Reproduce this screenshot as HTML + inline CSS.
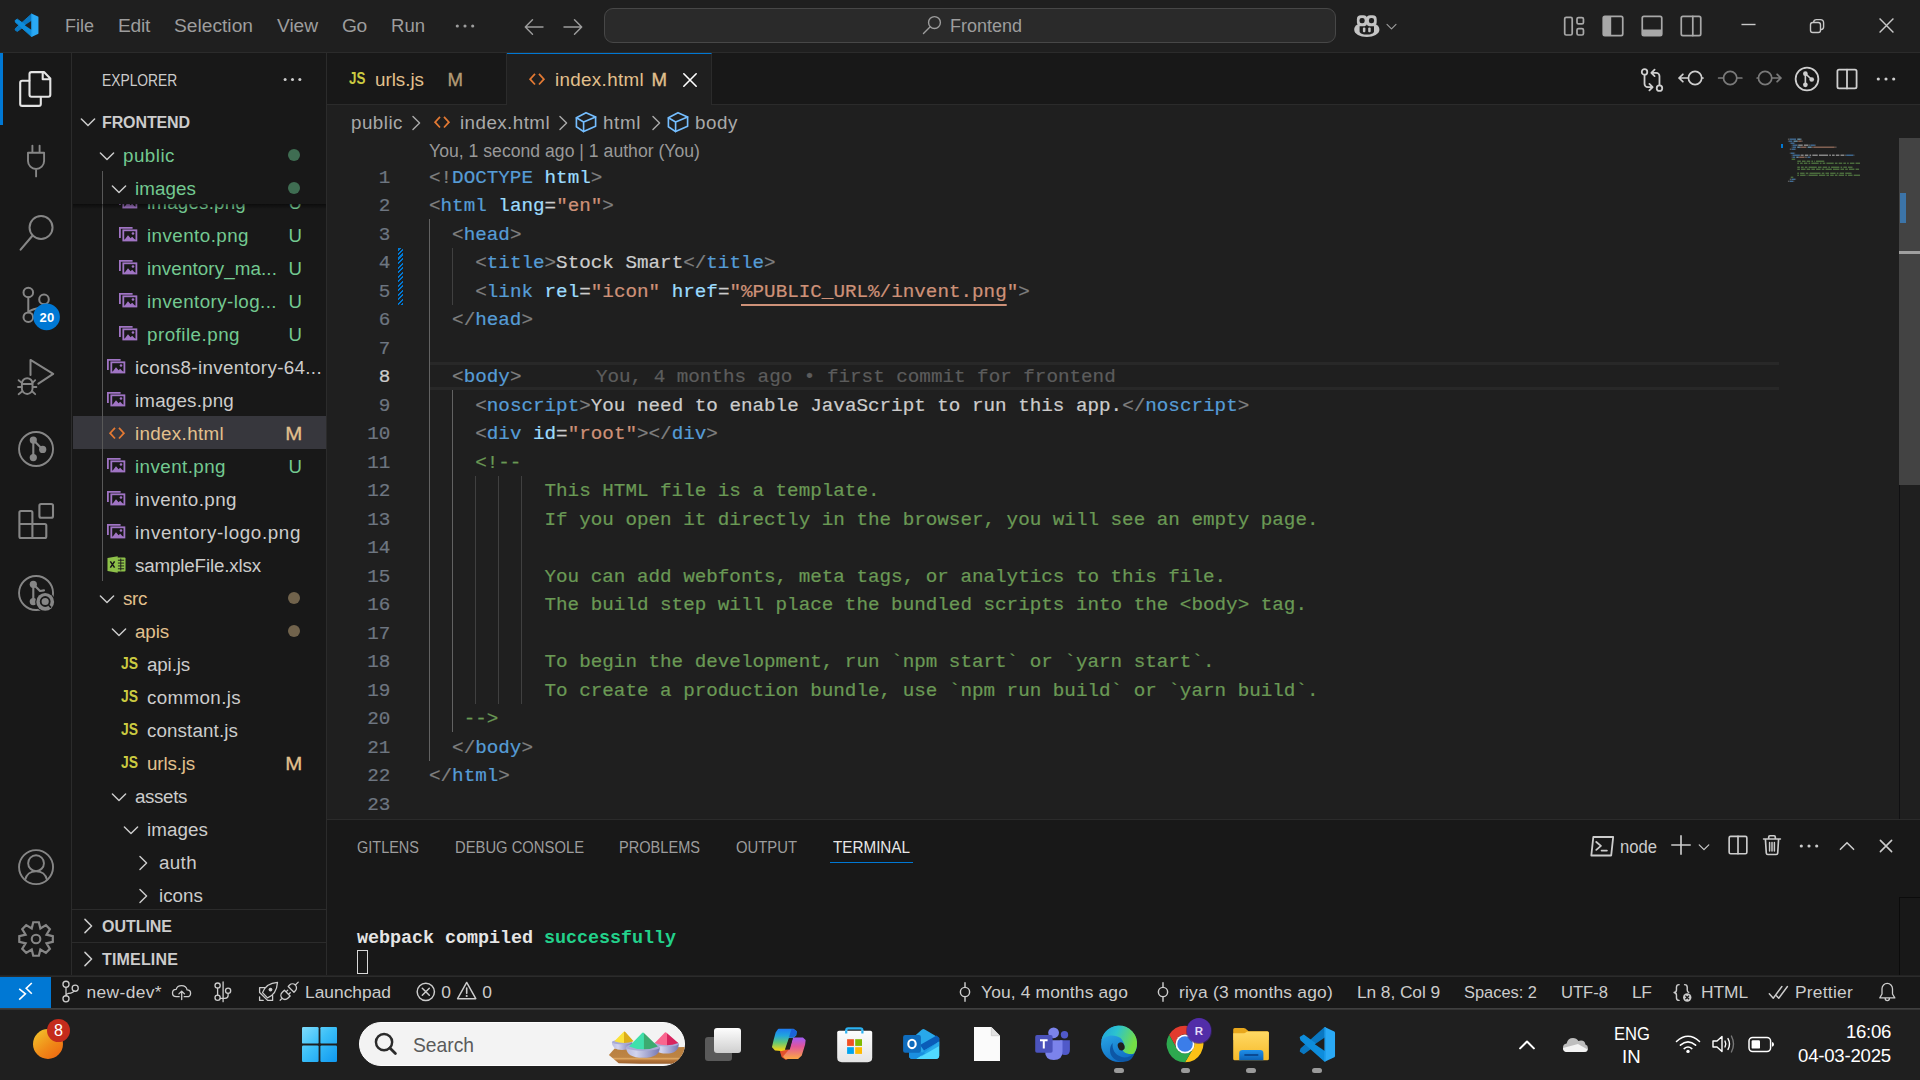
<!DOCTYPE html><html lang="en"><head><meta charset="utf-8"><title>index.html - Frontend - Visual Studio Code</title><style>

*{box-sizing:border-box;margin:0;padding:0}
html,body{width:1920px;height:1080px;overflow:hidden;background:#1f1f1f;font-family:"Liberation Sans",sans-serif;}
body{position:relative}
div,svg,span.t{position:absolute}
span.t{white-space:pre;display:block}
svg{overflow:visible}
.m{font-family:"Liberation Mono",monospace;-webkit-text-stroke-width:.22px}
.u{text-decoration:underline;text-underline-offset:7.4px;text-decoration-thickness:1.6px}
.g{color:#808080}.b{color:#569cd6}.a{color:#9cdcfe}.s{color:#ce9178}.c{color:#6a9955}.w{color:#cccccc}

</style></head><body>
<div style="left:0px;top:0px;width:1920px;height:53px;background:#1f1f1f;border-bottom:1px solid #2b2b2b;"></div>
<div style="left:0px;top:53px;width:72px;height:923px;background:#181818;border-right:1px solid #2b2b2b;"></div>
<div style="left:72px;top:53px;width:255px;height:923px;background:#181818;border-right:1px solid #2b2b2b;"></div>
<div style="left:327px;top:53px;width:1593px;height:52px;background:#181818;border-bottom:1px solid #2b2b2b;"></div>
<div style="left:327px;top:105px;width:1593px;height:714px;background:#1f1f1f;"></div>
<div style="left:327px;top:819px;width:1593px;height:157px;background:#181818;border-top:1px solid #2b2b2b;"></div>
<div style="left:0px;top:975px;width:1920px;height:33px;background:#181818;"></div>
<div style="left:0px;top:975px;width:1920px;height:1px;background:#232323;"></div>
<div style="left:0px;top:976px;width:1920px;height:1px;background:#2b2b2b;"></div>
<div style="left:0px;top:1008px;width:1920px;height:72px;background:#1f1f1f;"></div>
<div style="left:0px;top:1008px;width:1920px;height:2px;background:linear-gradient(#444,#303030);"></div>
<svg style="left:14px;top:13.4px;" width="24.8" height="24.6" viewBox="0 0 100 100"><path d="M70 5 L73 31 L13 75 L4 69 L6 62 Z" fill="#0a78c2" stroke="#0a78c2" stroke-width="4" stroke-linejoin="round"/><path d="M4 31 L13 25 L73 69 L70 95 L6 38 Z" fill="#0e8ddc" stroke="#0e8ddc" stroke-width="4" stroke-linejoin="round"/><path d="M73 30 L43.5 50 L73 70 Z" fill="#1f1f1f"/><path d="M70.5 2.5 L97 14.5 Q99 15.5 99 18 V82 Q99 84.5 97 85.5 L70.5 97.5 Z" fill="#2aa9f5"/><path d="M70.5 2.5 L74 4 V96 L70.5 97.5 Z" fill="#1e9cec"/></svg>
<span class="t" style="top:11.8px;height:27px;line-height:27px;font-size:19.2px;color:#9d9d9d;left:65px;transform:scaleX(0.9378);transform-origin:0 50%;">File</span>
<span class="t" style="top:11.8px;height:27px;line-height:27px;font-size:19.2px;color:#9d9d9d;left:118px;letter-spacing:-0.270px;">Edit</span>
<span class="t" style="top:11.8px;height:27px;line-height:27px;font-size:19.2px;color:#9d9d9d;left:174px;letter-spacing:0.007px;">Selection</span>
<span class="t" style="top:11.8px;height:27px;line-height:27px;font-size:19.2px;color:#9d9d9d;left:277px;letter-spacing:-0.062px;">View</span>
<span class="t" style="top:11.8px;height:27px;line-height:27px;font-size:19.2px;color:#9d9d9d;left:342px;letter-spacing:-0.305px;">Go</span>
<span class="t" style="top:11.8px;height:27px;line-height:27px;font-size:19.2px;color:#9d9d9d;left:391px;transform:scaleX(0.9658);transform-origin:0 50%;">Run</span>
<svg style="left:454px;top:15px;" width="22" height="22" viewBox="0 0 16 16"><circle cx="2.4" cy="8" r="1.15" fill="#9d9d9d"/><circle cx="8" cy="8" r="1.15" fill="#9d9d9d"/><circle cx="13.6" cy="8" r="1.15" fill="#9d9d9d"/></svg>
<svg style="left:522px;top:15px;" width="24" height="24" viewBox="0 0 16 16"><path d="M14 8 H2.5 M7 3.2 L2.2 8 L7 12.8" fill="none" stroke="#9d9d9d" stroke-width="0.95" stroke-linecap="round" stroke-linejoin="round"  stroke-linecap="butt" stroke-linejoin="miter"/></svg>
<svg style="left:561px;top:15px;" width="24" height="24" viewBox="0 0 16 16"><path d="M2 8 H13.5 M9 3.2 L13.8 8 L9 12.8" fill="none" stroke="#9d9d9d" stroke-width="0.95" stroke-linecap="round" stroke-linejoin="round"  stroke-linecap="butt" stroke-linejoin="miter"/></svg>
<div style="left:604px;top:8px;width:732px;height:35px;background:#2a2a2a;border:1px solid #474747;border-radius:9px;"></div>
<svg style="left:921px;top:14px;" width="22" height="22" viewBox="0 0 16 16"><circle cx="9.8" cy="6.2" r="4.3" fill="none" stroke="#9d9d9d" stroke-width="1.0" stroke-linecap="round" stroke-linejoin="round" /><path d="M6.7 9.3 L1.8 14.2" fill="none" stroke="#9d9d9d" stroke-width="1.0" stroke-linecap="round" stroke-linejoin="round" /></svg>
<span class="t" style="top:13.7px;height:25px;line-height:25px;font-size:18px;color:#9d9d9d;left:950px;letter-spacing:-0.006px;">Frontend</span>
<svg style="left:1354.4px;top:15px;" width="25.6" height="22" viewBox="0 0 25.6 22"><path d="M3.4 9.6 C1.2 10.6 .2 12.6 .2 14.8 C.2 19 6 22 12.8 22 S25.4 19 25.4 14.8 C25.4 12.6 24.4 10.6 22.2 9.6 Z" fill="#c4c4c4"/><rect x="2.9" y=".3" width="10.4" height="10.6" rx="4" fill="#c4c4c4"/><rect x="12.3" y=".3" width="10.4" height="10.6" rx="4" fill="#c4c4c4"/><rect x="5.5" y="2.9" width="5.2" height="5.4" rx="2.3" fill="#1f1f1f"/><rect x="14.9" y="2.9" width="5.2" height="5.4" rx="2.3" fill="#1f1f1f"/><path d="M5.6 11.3 L10.6 11.3 L12.8 9.9 L15 11.3 L20 11.3 V16.4 C20 18.4 16 19.6 12.8 19.6 S5.6 18.4 5.6 16.4 Z" fill="#1f1f1f"/><rect x="8.9" y="12.6" width="2.5" height="4.6" rx="1" fill="#c4c4c4"/><rect x="14.2" y="12.6" width="2.5" height="4.6" rx="1" fill="#c4c4c4"/></svg>
<svg style="left:1384px;top:19px;" width="15" height="15" viewBox="0 0 16 16"><path d="M3.2 5.8 L8 10.6 L12.8 5.8" fill="none" stroke="#9d9d9d" stroke-width="1.2" stroke-linecap="round" stroke-linejoin="round"  stroke-linecap="butt" stroke-linejoin="miter"/></svg>
<svg style="left:1562px;top:14px;" width="24" height="24" viewBox="0 0 16 16"><rect x="1.8" y="2.2" width="5" height="11.8" rx="1" fill="none" stroke="#a8a8a8" stroke-width="1.15" stroke-linecap="round" stroke-linejoin="round" /><rect x="10" y="2.4" width="4.3" height="4.2" rx="1" fill="none" stroke="#a8a8a8" stroke-width="1.15" stroke-linecap="round" stroke-linejoin="round" /><rect x="10" y="9.7" width="4.3" height="4.3" rx="1" fill="none" stroke="#a8a8a8" stroke-width="1.15" stroke-linecap="round" stroke-linejoin="round" /></svg>
<svg style="left:1601px;top:14px;" width="24" height="24" viewBox="0 0 16 16"><rect x="1.5" y="1.6" width="13" height="12.8" rx="1.1" fill="none" stroke="#a8a8a8" stroke-width="1.15" stroke-linecap="round" stroke-linejoin="round" /><path d="M1.6 2.6 a1 1 0 0 1 1-1 H6.8 V14.4 H2.6 a1 1 0 0 1-1-1 Z" fill="#a8a8a8"/></svg>
<svg style="left:1640px;top:14px;" width="24" height="24" viewBox="0 0 16 16"><rect x="1.5" y="1.6" width="13" height="12.8" rx="1.1" fill="none" stroke="#a8a8a8" stroke-width="1.15" stroke-linecap="round" stroke-linejoin="round" /><path d="M1.6 10.4 H14.4 V13.4 a1 1 0 0 1-1 1 H2.6 a1 1 0 0 1-1-1 Z" fill="#a8a8a8"/></svg>
<svg style="left:1679px;top:14px;" width="24" height="24" viewBox="0 0 16 16"><rect x="1.5" y="1.6" width="13" height="12.8" rx="1.1" fill="none" stroke="#a8a8a8" stroke-width="1.15" stroke-linecap="round" stroke-linejoin="round" /><path d="M9.2 1.6 V14.4" fill="none" stroke="#a8a8a8" stroke-width="1.15" stroke-linecap="round" stroke-linejoin="round" /></svg>
<svg style="left:1741px;top:17.2px;" width="15" height="15" viewBox="0 0 16 16"><path d="M.5 8 H15.5" stroke="#c8c8c8" stroke-width="1.5"/></svg>
<svg style="left:1809px;top:18px;" width="16" height="16" viewBox="0 0 16 16"><rect x="1.5" y="4.5" width="10" height="10" rx="2.2" fill="none" stroke="#c8c8c8" stroke-width="1.4" stroke-linecap="round" stroke-linejoin="round" /><path d="M4.6 4.2 C4.8 2.6 5.8 1.6 7.4 1.6 H11.4 A3.2 3.2 0 0 1 14.6 4.8 V9 C14.6 10.4 13.6 11.4 12 11.6" fill="none" stroke="#c8c8c8" stroke-width="1.4" stroke-linecap="round" stroke-linejoin="round" /></svg>
<svg style="left:1879px;top:18px;" width="15" height="15" viewBox="0 0 16 16"><path d="M.6 .6 L15.4 15.4 M15.4 .6 L.6 15.4" stroke="#c8c8c8" stroke-width="1.5"/></svg>
<div style="left:0px;top:53px;width:3px;height:72px;background:#0078d4;"></div>
<svg style="left:0px;top:0px;" width="72" height="976" viewBox="0 0 72 976"><path d="M31.5 72.1 H44 L50.3 78.4 V94.8 a2 2 0 0 1-2 2 H31.5 a2 2 0 0 1-2-2 V74.1 a2 2 0 0 1 2-2 Z M42.7 72.4 V79.2 H50" fill="none" stroke="#e4e4e4" stroke-width="2.1" stroke-linecap="round" stroke-linejoin="round"/><path d="M29.3 80.8 H22.2 a2 2 0 0 0-2 2 V103.9 a2 2 0 0 0 2 2 H38.8 a2 2 0 0 0 2-2 V97" fill="none" stroke="#e4e4e4" stroke-width="2.1" stroke-linecap="round" stroke-linejoin="round"/><path d="M32.4 145.6 V152.6 M39.6 145.6 V152.6 M28 152.8 H44.1 V160.9 a8.05 8.05 0 0 1-16.1 0 Z M36.1 169 V176.4" fill="none" stroke="#868686" stroke-width="1.9" stroke-linecap="round" stroke-linejoin="round" stroke-linecap="butt"/><circle cx="41.05" cy="227.5" r="11.5" fill="none" stroke="#868686" stroke-width="2" stroke-linecap="round" stroke-linejoin="round"/><path d="M32.6 235.5 L20.6 249.6" fill="none" stroke="#868686" stroke-width="2.1" stroke-linecap="round" stroke-linejoin="round" stroke-linecap="butt"/><circle cx="28.3" cy="292.5" r="4.8" fill="none" stroke="#868686" stroke-width="2" stroke-linecap="round" stroke-linejoin="round"/><circle cx="44" cy="299.4" r="4.8" fill="none" stroke="#868686" stroke-width="2" stroke-linecap="round" stroke-linejoin="round"/><circle cx="28.3" cy="317.2" r="4.8" fill="none" stroke="#868686" stroke-width="2" stroke-linecap="round" stroke-linejoin="round"/><path d="M28.3 297.4 V312.3 M44 304.3 C44 309.5 32 307.5 28.8 312" fill="none" stroke="#868686" stroke-width="2" stroke-linecap="round" stroke-linejoin="round"/><circle cx="46.6" cy="316.9" r="13.3" fill="#0078d4"/><path d="M30.5 375 V359.9 L53.2 373.9 L38.4 383.7" fill="none" stroke="#868686" stroke-width="2" stroke-linecap="round" stroke-linejoin="round" stroke-linecap="butt" stroke-linejoin="miter"/><rect x="21.9" y="378.2" width="10.6" height="15.8" rx="5.3" fill="none" stroke="#868686" stroke-width="1.9" stroke-linecap="round" stroke-linejoin="round"/><path d="M22 384 H32.4 M18 387 H21.6 M32.8 387 H36.4 M18.6 380.2 L22.4 383.4 M35.2 380.2 L32 383.4 M18.6 394.2 L22.6 391 M35.2 394.2 L31.8 391" fill="none" stroke="#868686" stroke-width="1.8" stroke-linecap="round" stroke-linejoin="round" stroke-linecap="butt"/><circle cx="36.05" cy="449" r="17" fill="none" stroke="#868686" stroke-width="1.9" stroke-linecap="round" stroke-linejoin="round"/><circle cx="33.3" cy="440.1" r="3.6" fill="#868686"/><circle cx="33.3" cy="457.6" r="3.6" fill="#868686"/><circle cx="42.7" cy="449.4" r="3.6" fill="#868686"/><path d="M33.3 440.1 V457.6 M33.3 440.1 L42.7 449.4" fill="none" stroke="#868686" stroke-width="2.1" stroke-linecap="round" stroke-linejoin="round"/><path d="M19.4 512.5 a1.5 1.5 0 0 1 1.5-1.5 H30.9 a1.5 1.5 0 0 1 1.5 1.5 V524 H44.8 a1.5 1.5 0 0 1 1.5 1.5 V536.5 a1.5 1.5 0 0 1-1.5 1.5 H20.9 a1.5 1.5 0 0 1-1.5-1.5 Z M19.4 524 H32.4 V538" fill="none" stroke="#868686" stroke-width="2.1" stroke-linecap="round" stroke-linejoin="round"/><rect x="39.4" y="504" width="13.6" height="13.7" rx="1.8" fill="none" stroke="#868686" stroke-width="2.1" stroke-linecap="round" stroke-linejoin="round"/><circle cx="36.05" cy="593" r="17" fill="none" stroke="#868686" stroke-width="1.9" stroke-linecap="round" stroke-linejoin="round"/><circle cx="33.3" cy="584.3" r="3.6" fill="#868686"/><circle cx="33.3" cy="601.6" r="3.6" fill="#868686"/><path d="M33.3 584.3 V601.6 M33.3 584.3 L40 591 L44 590.4" fill="none" stroke="#868686" stroke-width="2.1" stroke-linecap="round" stroke-linejoin="round"/><circle cx="45.2" cy="601.9" r="10" fill="#181818"/><circle cx="45.2" cy="601.9" r="8.9" fill="#868686"/><circle cx="45.2" cy="601.5" r="4.5" fill="none" stroke="#181818" stroke-width="1.8"/><path d="M48.6 605 L51 607.6" stroke="#181818" stroke-width="1.6"/><circle cx="36.05" cy="867.1" r="17" fill="none" stroke="#868686" stroke-width="1.9" stroke-linecap="round" stroke-linejoin="round"/><circle cx="36.05" cy="863.2" r="7.9" fill="none" stroke="#868686" stroke-width="1.9" stroke-linecap="round" stroke-linejoin="round"/><path d="M25.2 879.6 C26.6 874 30.6 871.4 36.05 871.4 S45.6 874 46.9 879.6" fill="none" stroke="#868686" stroke-width="1.9" stroke-linecap="round" stroke-linejoin="round"/><path d="M33.24 922.23 L38.86 922.23 L40.37 928.56 L45.92 925.16 L49.89 929.13 L46.49 934.68 L52.82 936.19 L52.82 941.81 L46.49 943.32 L49.89 948.87 L45.92 952.84 L40.37 949.44 L38.86 955.77 L33.24 955.77 L31.73 949.44 L26.18 952.84 L22.21 948.87 L25.61 943.32 L19.28 941.81 L19.28 936.19 L25.61 934.68 L22.21 929.13 L26.18 925.16 L31.73 928.56 Z" fill="none" stroke="#868686" stroke-width="2.2" stroke-linejoin="miter"/><circle cx="36.05" cy="939" r="4.3" fill="none" stroke="#868686" stroke-width="2.1" stroke-linecap="round" stroke-linejoin="round"/></svg>
<span class="t" style="top:309.2px;height:18px;line-height:18px;font-size:13px;color:#fff;font-weight:700;left:39.4px;letter-spacing:0.266px;">20</span>
<span class="t" style="top:68.8px;height:23px;line-height:23px;font-size:16.2px;color:#cccccc;left:102px;transform:scaleX(0.8540);transform-origin:0 50%;">EXPLORER</span>
<svg style="left:282px;top:69px;" width="21" height="21" viewBox="0 0 16 16"><circle cx="2.4" cy="8" r="1.15" fill="#cccccc"/><circle cx="8" cy="8" r="1.15" fill="#cccccc"/><circle cx="13.6" cy="8" r="1.15" fill="#cccccc"/></svg>
<svg style="left:76.5px;top:111px;" width="22" height="22" viewBox="0 0 16 16"><path d="M3.2 5.8 L8 10.6 L12.8 5.8" fill="none" stroke="#cccccc" stroke-width="1.1" stroke-linecap="round" stroke-linejoin="round"  stroke-linecap="butt" stroke-linejoin="miter"/></svg>
<span class="t" style="top:112px;height:22px;line-height:22px;font-size:16px;color:#cccccc;font-weight:700;left:102px;letter-spacing:-0.111px;">FRONTEND</span>
<div style="left:0;top:0;width:1920px;height:1080px;clip-path:inset(204px 1594px 170px 73px);">
<div style="left:73px;top:416px;width:253px;height:33px;background:#37373d;"></div>
<div style="left:102px;top:171px;width:1px;height:410px;background:#585858;"></div>
<svg style="left:119.4px;top:193.5px;" width="18.3" height="14.4" viewBox="0 0 18.3 14.4"><path d="M.9 10.9 V.9 H13.6" fill="none" stroke="#a074c4" stroke-width="1.8"/><rect x="4.3" y="3.3" width="13.1" height="10.2" fill="none" stroke="#a074c4" stroke-width="1.8"/><path d="M5 13.6 L9 8.2 L11.6 11.3 L13.2 9.7 L16.7 13.6 Z" fill="#a074c4"/><circle cx="14" cy="6.5" r="1.3" fill="#a074c4"/></svg>
<span class="t" style="top:190px;height:26px;line-height:26px;font-size:18.8px;color:#73c991;left:147px;letter-spacing:0.189px;">images.png</span>
<span class="t" style="top:190px;height:26px;line-height:26px;font-size:18.6px;color:#73c991;left:288.5px;">U</span>
<svg style="left:119.4px;top:226.5px;" width="18.3" height="14.4" viewBox="0 0 18.3 14.4"><path d="M.9 10.9 V.9 H13.6" fill="none" stroke="#a074c4" stroke-width="1.8"/><rect x="4.3" y="3.3" width="13.1" height="10.2" fill="none" stroke="#a074c4" stroke-width="1.8"/><path d="M5 13.6 L9 8.2 L11.6 11.3 L13.2 9.7 L16.7 13.6 Z" fill="#a074c4"/><circle cx="14" cy="6.5" r="1.3" fill="#a074c4"/></svg>
<span class="t" style="top:223px;height:26px;line-height:26px;font-size:18.8px;color:#73c991;left:147px;letter-spacing:0.443px;">invento.png</span>
<span class="t" style="top:223px;height:26px;line-height:26px;font-size:18.6px;color:#73c991;left:288.5px;">U</span>
<svg style="left:119.4px;top:259.5px;" width="18.3" height="14.4" viewBox="0 0 18.3 14.4"><path d="M.9 10.9 V.9 H13.6" fill="none" stroke="#a074c4" stroke-width="1.8"/><rect x="4.3" y="3.3" width="13.1" height="10.2" fill="none" stroke="#a074c4" stroke-width="1.8"/><path d="M5 13.6 L9 8.2 L11.6 11.3 L13.2 9.7 L16.7 13.6 Z" fill="#a074c4"/><circle cx="14" cy="6.5" r="1.3" fill="#a074c4"/></svg>
<span class="t" style="top:256px;height:26px;line-height:26px;font-size:18.8px;color:#73c991;left:147px;letter-spacing:0.106px;">inventory_ma...</span>
<span class="t" style="top:256px;height:26px;line-height:26px;font-size:18.6px;color:#73c991;left:288.5px;">U</span>
<svg style="left:119.4px;top:292.5px;" width="18.3" height="14.4" viewBox="0 0 18.3 14.4"><path d="M.9 10.9 V.9 H13.6" fill="none" stroke="#a074c4" stroke-width="1.8"/><rect x="4.3" y="3.3" width="13.1" height="10.2" fill="none" stroke="#a074c4" stroke-width="1.8"/><path d="M5 13.6 L9 8.2 L11.6 11.3 L13.2 9.7 L16.7 13.6 Z" fill="#a074c4"/><circle cx="14" cy="6.5" r="1.3" fill="#a074c4"/></svg>
<span class="t" style="top:289px;height:26px;line-height:26px;font-size:18.8px;color:#73c991;left:147px;letter-spacing:0.426px;">inventory-log...</span>
<span class="t" style="top:289px;height:26px;line-height:26px;font-size:18.6px;color:#73c991;left:288.5px;">U</span>
<svg style="left:119.4px;top:325.5px;" width="18.3" height="14.4" viewBox="0 0 18.3 14.4"><path d="M.9 10.9 V.9 H13.6" fill="none" stroke="#a074c4" stroke-width="1.8"/><rect x="4.3" y="3.3" width="13.1" height="10.2" fill="none" stroke="#a074c4" stroke-width="1.8"/><path d="M5 13.6 L9 8.2 L11.6 11.3 L13.2 9.7 L16.7 13.6 Z" fill="#a074c4"/><circle cx="14" cy="6.5" r="1.3" fill="#a074c4"/></svg>
<span class="t" style="top:322px;height:26px;line-height:26px;font-size:18.8px;color:#73c991;left:147px;letter-spacing:0.480px;">profile.png</span>
<span class="t" style="top:322px;height:26px;line-height:26px;font-size:18.6px;color:#73c991;left:288.5px;">U</span>
<svg style="left:107.4px;top:358.5px;" width="18.3" height="14.4" viewBox="0 0 18.3 14.4"><path d="M.9 10.9 V.9 H13.6" fill="none" stroke="#a074c4" stroke-width="1.8"/><rect x="4.3" y="3.3" width="13.1" height="10.2" fill="none" stroke="#a074c4" stroke-width="1.8"/><path d="M5 13.6 L9 8.2 L11.6 11.3 L13.2 9.7 L16.7 13.6 Z" fill="#a074c4"/><circle cx="14" cy="6.5" r="1.3" fill="#a074c4"/></svg>
<span class="t" style="top:355px;height:26px;line-height:26px;font-size:18.8px;color:#cccccc;left:135px;letter-spacing:0.338px;">icons8-inventory-64...</span>
<svg style="left:107.4px;top:391.5px;" width="18.3" height="14.4" viewBox="0 0 18.3 14.4"><path d="M.9 10.9 V.9 H13.6" fill="none" stroke="#a074c4" stroke-width="1.8"/><rect x="4.3" y="3.3" width="13.1" height="10.2" fill="none" stroke="#a074c4" stroke-width="1.8"/><path d="M5 13.6 L9 8.2 L11.6 11.3 L13.2 9.7 L16.7 13.6 Z" fill="#a074c4"/><circle cx="14" cy="6.5" r="1.3" fill="#a074c4"/></svg>
<span class="t" style="top:388px;height:26px;line-height:26px;font-size:18.8px;color:#cccccc;left:135px;letter-spacing:0.189px;">images.png</span>
<svg style="left:109px;top:426.8px;" width="16" height="12.4" viewBox="0 0 16 12.4"><path d="M6 .9 L1.1 6.2 L6 11.5 M10 .9 L14.9 6.2 L10 11.5" fill="none" stroke="#e37933" stroke-width="1.75" stroke-linejoin="miter"/></svg>
<span class="t" style="top:421px;height:26px;line-height:26px;font-size:18.8px;color:#e2c08d;left:135px;letter-spacing:0.339px;">index.html</span>
<span class="t" style="top:421px;height:26px;line-height:26px;font-size:18.6px;color:#e2c08d;left:285.7px;transform:scaleX(1.1);-webkit-text-stroke:.3px #e2c08d;">M</span>
<svg style="left:107.4px;top:457.5px;" width="18.3" height="14.4" viewBox="0 0 18.3 14.4"><path d="M.9 10.9 V.9 H13.6" fill="none" stroke="#a074c4" stroke-width="1.8"/><rect x="4.3" y="3.3" width="13.1" height="10.2" fill="none" stroke="#a074c4" stroke-width="1.8"/><path d="M5 13.6 L9 8.2 L11.6 11.3 L13.2 9.7 L16.7 13.6 Z" fill="#a074c4"/><circle cx="14" cy="6.5" r="1.3" fill="#a074c4"/></svg>
<span class="t" style="top:454px;height:26px;line-height:26px;font-size:18.8px;color:#73c991;left:135px;letter-spacing:0.433px;">invent.png</span>
<span class="t" style="top:454px;height:26px;line-height:26px;font-size:18.6px;color:#73c991;left:288.5px;">U</span>
<svg style="left:107.4px;top:490.5px;" width="18.3" height="14.4" viewBox="0 0 18.3 14.4"><path d="M.9 10.9 V.9 H13.6" fill="none" stroke="#a074c4" stroke-width="1.8"/><rect x="4.3" y="3.3" width="13.1" height="10.2" fill="none" stroke="#a074c4" stroke-width="1.8"/><path d="M5 13.6 L9 8.2 L11.6 11.3 L13.2 9.7 L16.7 13.6 Z" fill="#a074c4"/><circle cx="14" cy="6.5" r="1.3" fill="#a074c4"/></svg>
<span class="t" style="top:487px;height:26px;line-height:26px;font-size:18.8px;color:#cccccc;left:135px;letter-spacing:0.443px;">invento.png</span>
<svg style="left:107.4px;top:523.5px;" width="18.3" height="14.4" viewBox="0 0 18.3 14.4"><path d="M.9 10.9 V.9 H13.6" fill="none" stroke="#a074c4" stroke-width="1.8"/><rect x="4.3" y="3.3" width="13.1" height="10.2" fill="none" stroke="#a074c4" stroke-width="1.8"/><path d="M5 13.6 L9 8.2 L11.6 11.3 L13.2 9.7 L16.7 13.6 Z" fill="#a074c4"/><circle cx="14" cy="6.5" r="1.3" fill="#a074c4"/></svg>
<span class="t" style="top:520px;height:26px;line-height:26px;font-size:18.8px;color:#cccccc;left:135px;letter-spacing:0.637px;">inventory-logo.png</span>
<svg style="left:107px;top:555px;" width="19" height="19" viewBox="0 0 16 16"><rect x="7" y="2.2" width="8.6" height="11.6" rx=".8" fill="#8dc149"/><path d="M9 4.4 H14.4 M9 6.8 H14.4 M9 9.2 H14.4 M9 11.6 H14.4 M11.6 3 V13" stroke="#1e1e1e" stroke-width=".8"/><path d="M.4 2.6 L9 1 V15 L.4 13.4 Z" fill="#8dc149"/><path d="M2.8 5.4 L6.4 10.6 M6.4 5.4 L2.8 10.6" stroke="#181818" stroke-width="1.3"/></svg>
<span class="t" style="top:553px;height:26px;line-height:26px;font-size:18.8px;color:#cccccc;left:135px;letter-spacing:-0.158px;">sampleFile.xlsx</span>
<svg style="left:96px;top:587.5px;" width="22" height="22" viewBox="0 0 16 16"><path d="M3.2 5.8 L8 10.6 L12.8 5.8" fill="none" stroke="#cccccc" stroke-width="1.05" stroke-linecap="round" stroke-linejoin="round"  stroke-linecap="butt" stroke-linejoin="miter"/></svg>
<span class="t" style="top:586px;height:26px;line-height:26px;font-size:18.8px;color:#e2c08d;left:123px;letter-spacing:-0.349px;">src</span>
<div style="left:288px;top:592px;width:12px;height:12px;background:#71634c;border-radius:6px;"></div>
<svg style="left:108px;top:620.5px;" width="22" height="22" viewBox="0 0 16 16"><path d="M3.2 5.8 L8 10.6 L12.8 5.8" fill="none" stroke="#cccccc" stroke-width="1.05" stroke-linecap="round" stroke-linejoin="round"  stroke-linecap="butt" stroke-linejoin="miter"/></svg>
<span class="t" style="top:619px;height:26px;line-height:26px;font-size:18.8px;color:#e2c08d;left:135px;letter-spacing:-0.117px;">apis</span>
<div style="left:288px;top:625px;width:12px;height:12px;background:#71634c;border-radius:6px;"></div>
<span class="t" style="top:652px;height:24px;line-height:24px;font-size:16.8px;color:#cbcb41;font-weight:700;left:120.5px;transform:scaleX(0.8280);transform-origin:0 50%;">JS</span>
<span class="t" style="top:652px;height:26px;line-height:26px;font-size:18.8px;color:#cccccc;left:147px;letter-spacing:-0.143px;">api.js</span>
<span class="t" style="top:685px;height:24px;line-height:24px;font-size:16.8px;color:#cbcb41;font-weight:700;left:120.5px;transform:scaleX(0.8280);transform-origin:0 50%;">JS</span>
<span class="t" style="top:685px;height:26px;line-height:26px;font-size:18.8px;color:#cccccc;left:147px;letter-spacing:0.354px;">common.js</span>
<span class="t" style="top:718px;height:24px;line-height:24px;font-size:16.8px;color:#cbcb41;font-weight:700;left:120.5px;transform:scaleX(0.8280);transform-origin:0 50%;">JS</span>
<span class="t" style="top:718px;height:26px;line-height:26px;font-size:18.8px;color:#cccccc;left:147px;letter-spacing:0.111px;">constant.js</span>
<span class="t" style="top:751px;height:24px;line-height:24px;font-size:16.8px;color:#cbcb41;font-weight:700;left:120.5px;transform:scaleX(0.8280);transform-origin:0 50%;">JS</span>
<span class="t" style="top:751px;height:26px;line-height:26px;font-size:18.8px;color:#e2c08d;left:147px;letter-spacing:-0.150px;">urls.js</span>
<span class="t" style="top:751px;height:26px;line-height:26px;font-size:18.6px;color:#e2c08d;left:285.7px;transform:scaleX(1.1);-webkit-text-stroke:.3px #e2c08d;">M</span>
<svg style="left:108px;top:785.5px;" width="22" height="22" viewBox="0 0 16 16"><path d="M3.2 5.8 L8 10.6 L12.8 5.8" fill="none" stroke="#cccccc" stroke-width="1.05" stroke-linecap="round" stroke-linejoin="round"  stroke-linecap="butt" stroke-linejoin="miter"/></svg>
<span class="t" style="top:784px;height:26px;line-height:26px;font-size:18.8px;color:#cccccc;left:135px;letter-spacing:-0.380px;">assets</span>
<svg style="left:120px;top:818.5px;" width="22" height="22" viewBox="0 0 16 16"><path d="M3.2 5.8 L8 10.6 L12.8 5.8" fill="none" stroke="#cccccc" stroke-width="1.05" stroke-linecap="round" stroke-linejoin="round"  stroke-linecap="butt" stroke-linejoin="miter"/></svg>
<span class="t" style="top:817px;height:26px;line-height:26px;font-size:18.8px;color:#cccccc;left:147px;letter-spacing:0.076px;">images</span>
<svg style="left:132px;top:851.5px;" width="22" height="22" viewBox="0 0 16 16"><path d="M5.8 3.2 L10.6 8 L5.8 12.8" fill="none" stroke="#cccccc" stroke-width="1.05" stroke-linecap="round" stroke-linejoin="round"  stroke-linecap="butt" stroke-linejoin="miter"/></svg>
<span class="t" style="top:850px;height:26px;line-height:26px;font-size:18.8px;color:#cccccc;left:159px;letter-spacing:0.359px;">auth</span>
<svg style="left:132px;top:884.5px;" width="22" height="22" viewBox="0 0 16 16"><path d="M5.8 3.2 L10.6 8 L5.8 12.8" fill="none" stroke="#cccccc" stroke-width="1.05" stroke-linecap="round" stroke-linejoin="round"  stroke-linecap="butt" stroke-linejoin="miter"/></svg>
<span class="t" style="top:883px;height:26px;line-height:26px;font-size:18.8px;color:#cccccc;left:159px;letter-spacing:0.028px;">icons</span>
</div>
<div style="left:73px;top:204px;width:253px;height:5px;background:linear-gradient(rgba(0,0,0,.5),rgba(0,0,0,0));"></div>
<div style="left:73px;top:138px;width:253px;height:66px;background:#181818;"></div>
<div style="left:102px;top:171px;width:1px;height:33px;background:#585858;"></div>
<svg style="left:96px;top:144.5px;" width="22" height="22" viewBox="0 0 16 16"><path d="M3.2 5.8 L8 10.6 L12.8 5.8" fill="none" stroke="#cccccc" stroke-width="1.05" stroke-linecap="round" stroke-linejoin="round"  stroke-linecap="butt" stroke-linejoin="miter"/></svg>
<span class="t" style="top:143px;height:26px;line-height:26px;font-size:18.8px;color:#73c991;left:123px;letter-spacing:0.487px;">public</span>
<div style="left:288px;top:149px;width:12px;height:12px;background:#3f6d52;border-radius:6px;"></div>
<svg style="left:108px;top:177.5px;" width="22" height="22" viewBox="0 0 16 16"><path d="M3.2 5.8 L8 10.6 L12.8 5.8" fill="none" stroke="#cccccc" stroke-width="1.05" stroke-linecap="round" stroke-linejoin="round"  stroke-linecap="butt" stroke-linejoin="miter"/></svg>
<span class="t" style="top:176px;height:26px;line-height:26px;font-size:18.8px;color:#73c991;left:135px;letter-spacing:0.076px;">images</span>
<div style="left:288px;top:182px;width:12px;height:12px;background:#3f6d52;border-radius:6px;"></div>
<div style="left:72px;top:909px;width:254px;height:1px;background:#2b2b2b;"></div>
<svg style="left:77px;top:915px;" width="22" height="22" viewBox="0 0 16 16"><path d="M5.8 3.2 L10.6 8 L5.8 12.8" fill="none" stroke="#cccccc" stroke-width="1.1" stroke-linecap="round" stroke-linejoin="round"  stroke-linecap="butt" stroke-linejoin="miter"/></svg>
<span class="t" style="top:916.3px;height:22px;line-height:22px;font-size:16px;color:#cccccc;font-weight:700;left:102px;letter-spacing:-0.031px;">OUTLINE</span>
<div style="left:72px;top:942px;width:254px;height:1px;background:#2b2b2b;"></div>
<svg style="left:77px;top:948px;" width="22" height="22" viewBox="0 0 16 16"><path d="M5.8 3.2 L10.6 8 L5.8 12.8" fill="none" stroke="#cccccc" stroke-width="1.1" stroke-linecap="round" stroke-linejoin="round"  stroke-linecap="butt" stroke-linejoin="miter"/></svg>
<span class="t" style="top:949.3px;height:22px;line-height:22px;font-size:16px;color:#cccccc;font-weight:700;left:102px;letter-spacing:0.166px;">TIMELINE</span>
<div style="left:327px;top:53px;width:180px;height:52px;background:#181818;border-right:1px solid #2b2b2b;border-bottom:1px solid #2b2b2b;"></div>
<span class="t" style="top:67px;height:24px;line-height:24px;font-size:16.8px;color:#cbcb41;font-weight:700;left:348.6px;transform:scaleX(0.7988);transform-origin:0 50%;">JS</span>
<span class="t" style="top:66.8px;height:26px;line-height:26px;font-size:18.8px;color:#e2c08d;left:375px;letter-spacing:-0.007px;">urls.js</span>
<span class="t" style="top:67px;height:26px;line-height:26px;font-size:18.6px;color:#b39b74;left:447.5px;-webkit-text-stroke:.35px #b39b74;">M</span>
<div style="left:507px;top:52.7px;width:205px;height:52.3px;background:#1f1f1f;border-top:1.5px solid #0078d4;border-right:1px solid #2b2b2b;"></div>
<svg style="left:528.7px;top:73.1px;" width="16" height="12.4" viewBox="0 0 16 12.4"><path d="M6 .9 L1.1 6.2 L6 11.5 M10 .9 L14.9 6.2 L10 11.5" fill="none" stroke="#e37933" stroke-width="1.75" stroke-linejoin="miter"/></svg>
<span class="t" style="top:66.8px;height:26px;line-height:26px;font-size:18.8px;color:#e2c08d;left:555px;letter-spacing:0.339px;">index.html</span>
<span class="t" style="top:67px;height:26px;line-height:26px;font-size:18.6px;color:#e2c08d;left:651.5px;-webkit-text-stroke:.35px #e2c08d;">M</span>
<svg style="left:679px;top:68.5px;" width="22" height="22" viewBox="0 0 16 16"><path d="M3.5 3.5 L12.5 12.5 M12.5 3.5 L3.5 12.5" fill="none" stroke="#ffffff" stroke-width="1.15" stroke-linecap="round" stroke-linejoin="round"  stroke-linecap="butt"/></svg>
<svg style="left:1638.5px;top:67px;" width="26" height="26" viewBox="0 0 16 16"><circle cx="3.4" cy="3" r="1.7" fill="none" stroke="#cfcfcf" stroke-width="1.1" stroke-linecap="round" stroke-linejoin="round" /><circle cx="12.6" cy="13" r="1.7" fill="none" stroke="#cfcfcf" stroke-width="1.1" stroke-linecap="round" stroke-linejoin="round" /><path d="M3.4 4.8 V10.4 a2 2 0 0 0 2 2 H8 M6.4 10.4 L8.4 12.4 L6.4 14.4" fill="none" stroke="#cfcfcf" stroke-width="1.1" stroke-linecap="round" stroke-linejoin="round" /><path d="M12.6 11.2 V5.6 a2 2 0 0 0-2-2 H8 M9.6 5.6 L7.6 3.6 L9.6 1.6" fill="none" stroke="#cfcfcf" stroke-width="1.1" stroke-linecap="round" stroke-linejoin="round" /></svg>
<svg style="left:1678px;top:65px;" width="26" height="26" viewBox="0 0 16 16"><circle cx="10.5" cy="8" r="4.1" fill="none" stroke="#cfcfcf" stroke-width="1.05" stroke-linecap="round" stroke-linejoin="round" /><path d="M6.4 8 H.6 M3 5.7 L.6 8 L3 10.3 M14.6 8 H15.4" fill="none" stroke="#cfcfcf" stroke-width="1.05" stroke-linecap="round" stroke-linejoin="round" /></svg>
<svg style="left:1717px;top:65px;" width="26" height="26" viewBox="0 0 16 16"><circle cx="8.1" cy="8" r="4.1" fill="none" stroke="#7a7a7a" stroke-width="1.05" stroke-linecap="round" stroke-linejoin="round" /><path d="M4 8 H1 M12.2 8 H15.3" fill="none" stroke="#7a7a7a" stroke-width="1.05" stroke-linecap="round" stroke-linejoin="round" /></svg>
<svg style="left:1756px;top:65px;" width="26" height="26" viewBox="0 0 16 16"><circle cx="5.6" cy="8" r="4.1" fill="none" stroke="#7a7a7a" stroke-width="1.05" stroke-linecap="round" stroke-linejoin="round" /><path d="M9.7 8 H15.4 M13 5.7 L15.4 8 L13 10.3 M1.5 8 H.7" fill="none" stroke="#7a7a7a" stroke-width="1.05" stroke-linecap="round" stroke-linejoin="round" /></svg>
<svg style="left:1794px;top:66px;" width="26" height="26" viewBox="0 0 16 16"><circle cx="8" cy="8" r="7" fill="none" stroke="#cfcfcf" stroke-width="1.1" stroke-linecap="round" stroke-linejoin="round" /><circle cx="7" cy="4.7" r="1.45" fill="#cfcfcf"/><circle cx="7" cy="11.6" r="1.45" fill="#cfcfcf"/><circle cx="10.9" cy="8.3" r="1.45" fill="#cfcfcf"/><path d="M7 4.7 V11.6 M7 4.7 L10.9 8.3" fill="none" stroke="#cfcfcf" stroke-width="1" stroke-linecap="round" stroke-linejoin="round" /></svg>
<svg style="left:1834px;top:66px;" width="26" height="26" viewBox="0 0 16 16"><rect x="2.1" y="2.2" width="11.8" height="11.6" rx="1" fill="none" stroke="#cfcfcf" stroke-width="1.1" stroke-linecap="round" stroke-linejoin="round" /><path d="M8 2.2 V13.8" fill="none" stroke="#cfcfcf" stroke-width="1.1" stroke-linecap="round" stroke-linejoin="round" /></svg>
<svg style="left:1874.5px;top:68px;" width="22" height="22" viewBox="0 0 16 16"><circle cx="2.4" cy="8" r="1.15" fill="#cfcfcf"/><circle cx="8" cy="8" r="1.15" fill="#cfcfcf"/><circle cx="13.6" cy="8" r="1.15" fill="#cfcfcf"/></svg>
<span class="t" style="top:110px;height:26px;line-height:26px;font-size:18.8px;color:#a9a9a9;left:351px;letter-spacing:0.487px;">public</span>
<svg style="left:404.5px;top:112px;" width="22" height="22" viewBox="0 0 16 16"><path d="M5.8 3.2 L10.6 8 L5.8 12.8" fill="none" stroke="#a9a9a9" stroke-width="1.05" stroke-linecap="round" stroke-linejoin="round"  stroke-linecap="butt" stroke-linejoin="miter"/></svg>
<svg style="left:434px;top:116.3px;" width="16" height="12.4" viewBox="0 0 16 12.4"><path d="M6 .9 L1.1 6.2 L6 11.5 M10 .9 L14.9 6.2 L10 11.5" fill="none" stroke="#e37933" stroke-width="1.75" stroke-linejoin="miter"/></svg>
<span class="t" style="top:110px;height:26px;line-height:26px;font-size:18.8px;color:#a9a9a9;left:460px;letter-spacing:0.439px;">index.html</span>
<svg style="left:551.5px;top:112px;" width="22" height="22" viewBox="0 0 16 16"><path d="M5.8 3.2 L10.6 8 L5.8 12.8" fill="none" stroke="#a9a9a9" stroke-width="1.05" stroke-linecap="round" stroke-linejoin="round"  stroke-linecap="butt" stroke-linejoin="miter"/></svg>
<svg style="left:574px;top:110px;" width="24" height="24" viewBox="0 0 16 16"><path d="M8 1.8 L14.4 4.6 V10.8 L6.4 14.4 L1.6 11.2 V5.2 Z" fill="none" stroke="#75beff" stroke-width="1.1" stroke-linecap="round" stroke-linejoin="round" /><path d="M1.6 5.2 L6.4 8 L14.4 4.6 M6.4 8 V14.4" fill="none" stroke="#75beff" stroke-width="1.1" stroke-linecap="round" stroke-linejoin="round" /></svg>
<span class="t" style="top:110px;height:26px;line-height:26px;font-size:18.8px;color:#a9a9a9;left:603px;letter-spacing:0.629px;">html</span>
<svg style="left:644.5px;top:112px;" width="22" height="22" viewBox="0 0 16 16"><path d="M5.8 3.2 L10.6 8 L5.8 12.8" fill="none" stroke="#a9a9a9" stroke-width="1.05" stroke-linecap="round" stroke-linejoin="round"  stroke-linecap="butt" stroke-linejoin="miter"/></svg>
<svg style="left:666px;top:110px;" width="24" height="24" viewBox="0 0 16 16"><path d="M8 1.8 L14.4 4.6 V10.8 L6.4 14.4 L1.6 11.2 V5.2 Z" fill="none" stroke="#75beff" stroke-width="1.1" stroke-linecap="round" stroke-linejoin="round" /><path d="M1.6 5.2 L6.4 8 L14.4 4.6 M6.4 8 V14.4" fill="none" stroke="#75beff" stroke-width="1.1" stroke-linecap="round" stroke-linejoin="round" /></svg>
<span class="t" style="top:110px;height:26px;line-height:26px;font-size:18.8px;color:#a9a9a9;left:695px;letter-spacing:0.566px;">body</span>
<span class="t" style="top:138.5px;height:25px;line-height:25px;font-size:17.6px;color:#999999;left:429px;letter-spacing:0.020px;">You, 1 second ago | 1 author (You)</span>
<div style="left:429px;top:362px;width:1350px;height:28px;border-top:3px solid #282828;border-bottom:3px solid #282828;"></div>
<div style="left:429px;top:219px;width:1px;height:542px;background:#626262;"></div>
<div style="left:452px;top:248px;width:1px;height:57px;background:#404040;"></div>
<div style="left:452px;top:390px;width:1px;height:342px;background:#626262;"></div>
<div style="left:475px;top:476px;width:1px;height:228px;background:#404040;"></div>
<div style="left:498px;top:476px;width:1px;height:228px;background:#404040;"></div>
<div style="left:521px;top:476px;width:1px;height:228px;background:#404040;"></div>
<div style="left:398px;top:248px;width:5px;height:57px;background:repeating-linear-gradient(-45deg,#0078d4 0 1.6px,#1f1f1f 1.6px 3.2px);"></div>
<span class="t m" style="top:163.85px;height:28px;line-height:28px;font-size:19.25px;color:#6e7681;right:1529.7px;">1</span>
<span class="t m" style="top:163.85px;height:28px;line-height:28px;font-size:19.25px;color:#cccccc;left:429px;"><span class="g">&lt;!</span><span class="b">DOCTYPE</span><span class="w"> </span><span class="a">html</span><span class="g">&gt;</span></span>
<span class="t m" style="top:192.35px;height:28px;line-height:28px;font-size:19.25px;color:#6e7681;right:1529.7px;">2</span>
<span class="t m" style="top:192.35px;height:28px;line-height:28px;font-size:19.25px;color:#cccccc;left:429px;"><span class="g">&lt;</span><span class="b">html</span><span class="w"> </span><span class="a">lang</span><span class="w">=</span><span class="s">&quot;en&quot;</span><span class="g">&gt;</span></span>
<span class="t m" style="top:220.85px;height:28px;line-height:28px;font-size:19.25px;color:#6e7681;right:1529.7px;">3</span>
<span class="t m" style="top:220.85px;height:28px;line-height:28px;font-size:19.25px;color:#cccccc;left:429px;"><span class="w">  </span><span class="g">&lt;</span><span class="b">head</span><span class="g">&gt;</span></span>
<span class="t m" style="top:249.35px;height:28px;line-height:28px;font-size:19.25px;color:#6e7681;right:1529.7px;">4</span>
<span class="t m" style="top:249.35px;height:28px;line-height:28px;font-size:19.25px;color:#cccccc;left:429px;"><span class="w">    </span><span class="g">&lt;</span><span class="b">title</span><span class="g">&gt;</span><span class="w">Stock Smart</span><span class="g">&lt;/</span><span class="b">title</span><span class="g">&gt;</span></span>
<span class="t m" style="top:277.85px;height:28px;line-height:28px;font-size:19.25px;color:#6e7681;right:1529.7px;">5</span>
<span class="t m" style="top:277.85px;height:28px;line-height:28px;font-size:19.25px;color:#cccccc;left:429px;"><span class="w">    </span><span class="g">&lt;</span><span class="b">link</span><span class="w"> </span><span class="a">rel</span><span class="w">=</span><span class="s">&quot;icon&quot;</span><span class="w"> </span><span class="a">href</span><span class="w">=</span><span class="s">&quot;</span><span class="s u">%PUBLIC_URL%/invent.png</span><span class="s">&quot;</span><span class="g">&gt;</span></span>
<span class="t m" style="top:306.35px;height:28px;line-height:28px;font-size:19.25px;color:#6e7681;right:1529.7px;">6</span>
<span class="t m" style="top:306.35px;height:28px;line-height:28px;font-size:19.25px;color:#cccccc;left:429px;"><span class="w">  </span><span class="g">&lt;/</span><span class="b">head</span><span class="g">&gt;</span></span>
<span class="t m" style="top:334.85px;height:28px;line-height:28px;font-size:19.25px;color:#6e7681;right:1529.7px;">7</span>
<span class="t m" style="top:363.35px;height:28px;line-height:28px;font-size:19.25px;color:#cccccc;right:1529.7px;">8</span>
<span class="t m" style="top:363.35px;height:28px;line-height:28px;font-size:19.25px;color:#cccccc;left:429px;"><span class="w">  </span><span class="g">&lt;</span><span class="b">body</span><span class="g">&gt;</span></span>
<span class="t m" style="top:391.85px;height:28px;line-height:28px;font-size:19.25px;color:#6e7681;right:1529.7px;">9</span>
<span class="t m" style="top:391.85px;height:28px;line-height:28px;font-size:19.25px;color:#cccccc;left:429px;"><span class="w">    </span><span class="g">&lt;</span><span class="b">noscript</span><span class="g">&gt;</span><span class="w">You need to enable JavaScript to run this app.</span><span class="g">&lt;/</span><span class="b">noscript</span><span class="g">&gt;</span></span>
<span class="t m" style="top:420.35px;height:28px;line-height:28px;font-size:19.25px;color:#6e7681;right:1529.7px;">10</span>
<span class="t m" style="top:420.35px;height:28px;line-height:28px;font-size:19.25px;color:#cccccc;left:429px;"><span class="w">    </span><span class="g">&lt;</span><span class="b">div</span><span class="w"> </span><span class="a">id</span><span class="w">=</span><span class="s">&quot;root&quot;</span><span class="g">&gt;&lt;/</span><span class="b">div</span><span class="g">&gt;</span></span>
<span class="t m" style="top:448.85px;height:28px;line-height:28px;font-size:19.25px;color:#6e7681;right:1529.7px;">11</span>
<span class="t m" style="top:448.85px;height:28px;line-height:28px;font-size:19.25px;color:#cccccc;left:429px;"><span class="c">    &lt;!--</span></span>
<span class="t m" style="top:477.35px;height:28px;line-height:28px;font-size:19.25px;color:#6e7681;right:1529.7px;">12</span>
<span class="t m" style="top:477.35px;height:28px;line-height:28px;font-size:19.25px;color:#cccccc;left:429px;"><span class="c">          This HTML file is a template.</span></span>
<span class="t m" style="top:505.85px;height:28px;line-height:28px;font-size:19.25px;color:#6e7681;right:1529.7px;">13</span>
<span class="t m" style="top:505.85px;height:28px;line-height:28px;font-size:19.25px;color:#cccccc;left:429px;"><span class="c">          If you open it directly in the browser, you will see an empty page.</span></span>
<span class="t m" style="top:534.35px;height:28px;line-height:28px;font-size:19.25px;color:#6e7681;right:1529.7px;">14</span>
<span class="t m" style="top:562.85px;height:28px;line-height:28px;font-size:19.25px;color:#6e7681;right:1529.7px;">15</span>
<span class="t m" style="top:562.85px;height:28px;line-height:28px;font-size:19.25px;color:#cccccc;left:429px;"><span class="c">          You can add webfonts, meta tags, or analytics to this file.</span></span>
<span class="t m" style="top:591.35px;height:28px;line-height:28px;font-size:19.25px;color:#6e7681;right:1529.7px;">16</span>
<span class="t m" style="top:591.35px;height:28px;line-height:28px;font-size:19.25px;color:#cccccc;left:429px;"><span class="c">          The build step will place the bundled scripts into the &lt;body&gt; tag.</span></span>
<span class="t m" style="top:619.85px;height:28px;line-height:28px;font-size:19.25px;color:#6e7681;right:1529.7px;">17</span>
<span class="t m" style="top:648.35px;height:28px;line-height:28px;font-size:19.25px;color:#6e7681;right:1529.7px;">18</span>
<span class="t m" style="top:648.35px;height:28px;line-height:28px;font-size:19.25px;color:#cccccc;left:429px;"><span class="c">          To begin the development, run `npm start` or `yarn start`.</span></span>
<span class="t m" style="top:676.85px;height:28px;line-height:28px;font-size:19.25px;color:#6e7681;right:1529.7px;">19</span>
<span class="t m" style="top:676.85px;height:28px;line-height:28px;font-size:19.25px;color:#cccccc;left:429px;"><span class="c">          To create a production bundle, use `npm run build` or `yarn build`.</span></span>
<span class="t m" style="top:705.35px;height:28px;line-height:28px;font-size:19.25px;color:#6e7681;right:1529.7px;">20</span>
<span class="t m" style="top:705.35px;height:28px;line-height:28px;font-size:19.25px;color:#cccccc;left:429px;"><span class="c">   --&gt;</span></span>
<span class="t m" style="top:733.85px;height:28px;line-height:28px;font-size:19.25px;color:#6e7681;right:1529.7px;">21</span>
<span class="t m" style="top:733.85px;height:28px;line-height:28px;font-size:19.25px;color:#cccccc;left:429px;"><span class="w">  </span><span class="g">&lt;/</span><span class="b">body</span><span class="g">&gt;</span></span>
<span class="t m" style="top:762.35px;height:28px;line-height:28px;font-size:19.25px;color:#6e7681;right:1529.7px;">22</span>
<span class="t m" style="top:762.35px;height:28px;line-height:28px;font-size:19.25px;color:#cccccc;left:429px;"><span class="g">&lt;/</span><span class="b">html</span><span class="g">&gt;</span></span>
<span class="t m" style="top:790.85px;height:28px;line-height:28px;font-size:19.25px;color:#6e7681;right:1529.7px;">23</span>
<span class="t m" style="top:363.35px;height:28px;line-height:28px;font-size:19.25px;color:#5c5c5c;left:595.898px;">You, 4 months ago • first commit for frontend</span>
<svg style="left:0px;top:0px;" width="1920" height="300" viewBox="0 0 1920 300"><g opacity=".74"><rect x="1787.90" y="138.50" width="1.63" height="1.4" fill="#707070"/><rect x="1789.78" y="138.50" width="6.33" height="1.4" fill="#4c86bd"/><rect x="1797.30" y="138.50" width="3.51" height="1.4" fill="#7fb6d4"/><rect x="1801.06" y="138.50" width="0.69" height="1.4" fill="#707070"/><rect x="1787.90" y="140.50" width="0.69" height="1.4" fill="#707070"/><rect x="1788.84" y="140.50" width="3.51" height="1.4" fill="#4c86bd"/><rect x="1793.54" y="140.50" width="3.51" height="1.4" fill="#7fb6d4"/><rect x="1797.30" y="140.50" width="0.69" height="1.4" fill="#b5b5b5"/><rect x="1798.24" y="140.50" width="3.51" height="1.4" fill="#b07f6a"/><rect x="1802.00" y="140.50" width="0.69" height="1.4" fill="#707070"/><rect x="1789.78" y="142.51" width="0.69" height="1.4" fill="#707070"/><rect x="1790.72" y="142.51" width="3.51" height="1.4" fill="#4c86bd"/><rect x="1794.48" y="142.51" width="0.69" height="1.4" fill="#707070"/><rect x="1791.66" y="144.51" width="0.69" height="1.4" fill="#707070"/><rect x="1792.60" y="144.51" width="4.45" height="1.4" fill="#4c86bd"/><rect x="1797.30" y="144.51" width="0.69" height="1.4" fill="#707070"/><rect x="1798.24" y="144.51" width="4.45" height="1.4" fill="#b5b5b5"/><rect x="1803.88" y="144.51" width="4.45" height="1.4" fill="#b5b5b5"/><rect x="1808.58" y="144.51" width="1.63" height="1.4" fill="#707070"/><rect x="1810.46" y="144.51" width="4.45" height="1.4" fill="#4c86bd"/><rect x="1815.16" y="144.51" width="0.69" height="1.4" fill="#707070"/><rect x="1791.66" y="146.52" width="0.69" height="1.4" fill="#707070"/><rect x="1792.60" y="146.52" width="3.51" height="1.4" fill="#4c86bd"/><rect x="1797.30" y="146.52" width="2.57" height="1.4" fill="#7fb6d4"/><rect x="1800.12" y="146.52" width="0.69" height="1.4" fill="#b5b5b5"/><rect x="1801.06" y="146.52" width="5.39" height="1.4" fill="#b07f6a"/><rect x="1807.64" y="146.52" width="3.51" height="1.4" fill="#7fb6d4"/><rect x="1811.40" y="146.52" width="0.69" height="1.4" fill="#b5b5b5"/><rect x="1812.34" y="146.52" width="0.69" height="1.4" fill="#b07f6a"/><rect x="1813.28" y="146.52" width="21.37" height="1.4" fill="#b07f6a"/><rect x="1834.90" y="146.52" width="0.69" height="1.4" fill="#b07f6a"/><rect x="1835.84" y="146.52" width="0.69" height="1.4" fill="#707070"/><rect x="1789.78" y="148.53" width="1.63" height="1.4" fill="#707070"/><rect x="1791.66" y="148.53" width="3.51" height="1.4" fill="#4c86bd"/><rect x="1795.42" y="148.53" width="0.69" height="1.4" fill="#707070"/><rect x="1789.78" y="152.53" width="0.69" height="1.4" fill="#707070"/><rect x="1790.72" y="152.53" width="3.51" height="1.4" fill="#4c86bd"/><rect x="1794.48" y="152.53" width="0.69" height="1.4" fill="#707070"/><rect x="1791.66" y="154.54" width="0.69" height="1.4" fill="#707070"/><rect x="1792.60" y="154.54" width="7.27" height="1.4" fill="#4c86bd"/><rect x="1800.12" y="154.54" width="0.69" height="1.4" fill="#707070"/><rect x="1801.06" y="154.54" width="2.57" height="1.4" fill="#b5b5b5"/><rect x="1804.82" y="154.54" width="3.51" height="1.4" fill="#b5b5b5"/><rect x="1809.52" y="154.54" width="1.63" height="1.4" fill="#b5b5b5"/><rect x="1812.34" y="154.54" width="5.39" height="1.4" fill="#b5b5b5"/><rect x="1818.92" y="154.54" width="9.15" height="1.4" fill="#b5b5b5"/><rect x="1829.26" y="154.54" width="1.63" height="1.4" fill="#b5b5b5"/><rect x="1832.08" y="154.54" width="2.57" height="1.4" fill="#b5b5b5"/><rect x="1835.84" y="154.54" width="3.51" height="1.4" fill="#b5b5b5"/><rect x="1840.54" y="154.54" width="3.51" height="1.4" fill="#b5b5b5"/><rect x="1844.30" y="154.54" width="1.63" height="1.4" fill="#707070"/><rect x="1846.18" y="154.54" width="7.27" height="1.4" fill="#4c86bd"/><rect x="1853.70" y="154.54" width="0.69" height="1.4" fill="#707070"/><rect x="1791.66" y="156.54" width="0.69" height="1.4" fill="#707070"/><rect x="1792.60" y="156.54" width="2.57" height="1.4" fill="#4c86bd"/><rect x="1796.36" y="156.54" width="1.63" height="1.4" fill="#7fb6d4"/><rect x="1798.24" y="156.54" width="0.69" height="1.4" fill="#b5b5b5"/><rect x="1799.18" y="156.54" width="5.39" height="1.4" fill="#b07f6a"/><rect x="1804.82" y="156.54" width="2.57" height="1.4" fill="#707070"/><rect x="1807.64" y="156.54" width="2.57" height="1.4" fill="#4c86bd"/><rect x="1810.46" y="156.54" width="0.69" height="1.4" fill="#707070"/><rect x="1791.66" y="158.55" width="3.51" height="1.4" fill="#5c8a49"/><rect x="1797.30" y="160.56" width="3.51" height="1.4" fill="#5c8a49"/><rect x="1802.00" y="160.56" width="3.51" height="1.4" fill="#5c8a49"/><rect x="1806.70" y="160.56" width="3.51" height="1.4" fill="#5c8a49"/><rect x="1811.40" y="160.56" width="1.63" height="1.4" fill="#5c8a49"/><rect x="1814.22" y="160.56" width="0.69" height="1.4" fill="#5c8a49"/><rect x="1816.10" y="160.56" width="8.21" height="1.4" fill="#5c8a49"/><rect x="1797.30" y="162.56" width="1.63" height="1.4" fill="#5c8a49"/><rect x="1800.12" y="162.56" width="2.57" height="1.4" fill="#5c8a49"/><rect x="1803.88" y="162.56" width="3.51" height="1.4" fill="#5c8a49"/><rect x="1808.58" y="162.56" width="1.63" height="1.4" fill="#5c8a49"/><rect x="1811.40" y="162.56" width="7.27" height="1.4" fill="#5c8a49"/><rect x="1819.86" y="162.56" width="1.63" height="1.4" fill="#5c8a49"/><rect x="1822.68" y="162.56" width="2.57" height="1.4" fill="#5c8a49"/><rect x="1826.44" y="162.56" width="7.27" height="1.4" fill="#5c8a49"/><rect x="1834.90" y="162.56" width="2.57" height="1.4" fill="#5c8a49"/><rect x="1838.66" y="162.56" width="3.51" height="1.4" fill="#5c8a49"/><rect x="1843.36" y="162.56" width="2.57" height="1.4" fill="#5c8a49"/><rect x="1847.12" y="162.56" width="1.63" height="1.4" fill="#5c8a49"/><rect x="1849.94" y="162.56" width="4.45" height="1.4" fill="#5c8a49"/><rect x="1855.58" y="162.56" width="4.45" height="1.4" fill="#5c8a49"/><rect x="1797.30" y="166.57" width="2.57" height="1.4" fill="#5c8a49"/><rect x="1801.06" y="166.57" width="2.57" height="1.4" fill="#5c8a49"/><rect x="1804.82" y="166.57" width="2.57" height="1.4" fill="#5c8a49"/><rect x="1808.58" y="166.57" width="8.21" height="1.4" fill="#5c8a49"/><rect x="1817.98" y="166.57" width="3.51" height="1.4" fill="#5c8a49"/><rect x="1822.68" y="166.57" width="4.45" height="1.4" fill="#5c8a49"/><rect x="1828.32" y="166.57" width="1.63" height="1.4" fill="#5c8a49"/><rect x="1831.14" y="166.57" width="8.21" height="1.4" fill="#5c8a49"/><rect x="1840.54" y="166.57" width="1.63" height="1.4" fill="#5c8a49"/><rect x="1843.36" y="166.57" width="3.51" height="1.4" fill="#5c8a49"/><rect x="1848.06" y="166.57" width="4.45" height="1.4" fill="#5c8a49"/><rect x="1797.30" y="168.57" width="2.57" height="1.4" fill="#5c8a49"/><rect x="1801.06" y="168.57" width="4.45" height="1.4" fill="#5c8a49"/><rect x="1806.70" y="168.57" width="3.51" height="1.4" fill="#5c8a49"/><rect x="1811.40" y="168.57" width="3.51" height="1.4" fill="#5c8a49"/><rect x="1816.10" y="168.57" width="4.45" height="1.4" fill="#5c8a49"/><rect x="1821.74" y="168.57" width="2.57" height="1.4" fill="#5c8a49"/><rect x="1825.50" y="168.57" width="6.33" height="1.4" fill="#5c8a49"/><rect x="1833.02" y="168.57" width="6.33" height="1.4" fill="#5c8a49"/><rect x="1840.54" y="168.57" width="3.51" height="1.4" fill="#5c8a49"/><rect x="1845.24" y="168.57" width="2.57" height="1.4" fill="#5c8a49"/><rect x="1849.00" y="168.57" width="5.39" height="1.4" fill="#5c8a49"/><rect x="1855.58" y="168.57" width="3.51" height="1.4" fill="#5c8a49"/><rect x="1797.30" y="172.59" width="1.63" height="1.4" fill="#5c8a49"/><rect x="1800.12" y="172.59" width="4.45" height="1.4" fill="#5c8a49"/><rect x="1805.76" y="172.59" width="2.57" height="1.4" fill="#5c8a49"/><rect x="1809.52" y="172.59" width="11.03" height="1.4" fill="#5c8a49"/><rect x="1821.74" y="172.59" width="2.57" height="1.4" fill="#5c8a49"/><rect x="1825.50" y="172.59" width="3.51" height="1.4" fill="#5c8a49"/><rect x="1830.20" y="172.59" width="5.39" height="1.4" fill="#5c8a49"/><rect x="1836.78" y="172.59" width="1.63" height="1.4" fill="#5c8a49"/><rect x="1839.60" y="172.59" width="4.45" height="1.4" fill="#5c8a49"/><rect x="1845.24" y="172.59" width="6.33" height="1.4" fill="#5c8a49"/><rect x="1797.30" y="174.59" width="1.63" height="1.4" fill="#5c8a49"/><rect x="1800.12" y="174.59" width="5.39" height="1.4" fill="#5c8a49"/><rect x="1806.70" y="174.59" width="0.69" height="1.4" fill="#5c8a49"/><rect x="1808.58" y="174.59" width="9.15" height="1.4" fill="#5c8a49"/><rect x="1818.92" y="174.59" width="6.33" height="1.4" fill="#5c8a49"/><rect x="1826.44" y="174.59" width="2.57" height="1.4" fill="#5c8a49"/><rect x="1830.20" y="174.59" width="3.51" height="1.4" fill="#5c8a49"/><rect x="1834.90" y="174.59" width="2.57" height="1.4" fill="#5c8a49"/><rect x="1838.66" y="174.59" width="5.39" height="1.4" fill="#5c8a49"/><rect x="1845.24" y="174.59" width="1.63" height="1.4" fill="#5c8a49"/><rect x="1848.06" y="174.59" width="4.45" height="1.4" fill="#5c8a49"/><rect x="1853.70" y="174.59" width="6.33" height="1.4" fill="#5c8a49"/><rect x="1790.72" y="176.59" width="2.57" height="1.4" fill="#5c8a49"/><rect x="1789.78" y="178.60" width="1.63" height="1.4" fill="#707070"/><rect x="1791.66" y="178.60" width="3.51" height="1.4" fill="#4c86bd"/><rect x="1795.42" y="178.60" width="0.69" height="1.4" fill="#707070"/><rect x="1787.90" y="180.60" width="1.63" height="1.4" fill="#707070"/><rect x="1789.78" y="180.60" width="3.51" height="1.4" fill="#4c86bd"/><rect x="1793.54" y="180.60" width="0.69" height="1.4" fill="#707070"/></g></svg>
<div style="left:1781px;top:144px;width:2px;height:4px;background:#0078d4;"></div>
<div style="left:1899px;top:138px;width:1px;height:681px;background:#101012;"></div>
<div style="left:1899px;top:138px;width:21px;height:347px;background:#434343;"></div>
<div style="left:1900px;top:193px;width:6px;height:30px;background:#3c74a8;"></div>
<div style="left:1899px;top:251px;width:21px;height:3px;background:#a0a0a0;"></div>
<span class="t" style="top:836.3px;height:23px;line-height:23px;font-size:16.2px;color:#9d9d9d;left:357px;transform:scaleX(0.8951);transform-origin:0 50%;">GITLENS</span>
<span class="t" style="top:836.3px;height:23px;line-height:23px;font-size:16.2px;color:#9d9d9d;left:455px;transform:scaleX(0.9134);transform-origin:0 50%;">DEBUG CONSOLE</span>
<span class="t" style="top:836.3px;height:23px;line-height:23px;font-size:16.2px;color:#9d9d9d;left:619px;transform:scaleX(0.9003);transform-origin:0 50%;">PROBLEMS</span>
<span class="t" style="top:836.3px;height:23px;line-height:23px;font-size:16.2px;color:#9d9d9d;left:736px;transform:scaleX(0.9166);transform-origin:0 50%;">OUTPUT</span>
<span class="t" style="top:836.3px;height:23px;line-height:23px;font-size:16.2px;color:#e7e7e7;left:833px;transform:scaleX(0.9406);transform-origin:0 50%;">TERMINAL</span>
<div style="left:830px;top:861.5px;width:83px;height:1.1px;background:#0078d4;"></div>
<svg style="left:1589px;top:833.3px;" width="26.5" height="26.5" viewBox="0 0 16 16"><path d="M2.6 2.4 H14.6 L13.4 13.6 H1.4 Z" fill="none" stroke="#cccccc" stroke-width="1.1" stroke-linecap="round" stroke-linejoin="round" /><path d="M4.4 5.4 L7.2 7.8 L4.4 10.2 M7.6 10.6 H10.8" fill="none" stroke="#cccccc" stroke-width="1.1" stroke-linecap="round" stroke-linejoin="round" /></svg>
<span class="t" style="top:834.5px;height:25px;line-height:25px;font-size:18.2px;color:#cccccc;left:1620px;transform:scaleX(0.9143);transform-origin:0 50%;">node</span>
<svg style="left:1669px;top:833px;" width="24" height="24" viewBox="0 0 16 16"><path d="M8 1.5 V14.5 M1.5 8 H14.5" stroke="#cccccc" stroke-width="1.1" fill="none"/></svg>
<svg style="left:1696px;top:838.5px;" width="16" height="16" viewBox="0 0 16 16"><path d="M3.2 5.8 L8 10.6 L12.8 5.8" fill="none" stroke="#cccccc" stroke-width="1.2" stroke-linecap="round" stroke-linejoin="round"  stroke-linecap="butt" stroke-linejoin="miter"/></svg>
<svg style="left:1726px;top:833px;" width="24" height="24" viewBox="0 0 16 16"><rect x="2.1" y="2.2" width="11.8" height="11.6" rx="1" fill="none" stroke="#cccccc" stroke-width="1.1" stroke-linecap="round" stroke-linejoin="round" /><path d="M8 2.2 V13.8" fill="none" stroke="#cccccc" stroke-width="1.1" stroke-linecap="round" stroke-linejoin="round" /></svg>
<svg style="left:1760px;top:833px;" width="24" height="24" viewBox="0 0 16 16"><path d="M2.4 4 H13.6 M5.8 4 V2.6 a.8 .8 0 0 1 .8-.8 H9.4 a.8 .8 0 0 1 .8 .8 V4 M3.6 4 L4.2 13.4 a1 1 0 0 0 1 .9 H10.8 a1 1 0 0 0 1-.9 L12.4 4" fill="none" stroke="#cccccc" stroke-width="1.1" stroke-linecap="round" stroke-linejoin="round" /><path d="M6.4 6.4 V12 M8 6.4 V12 M9.6 6.4 V12" fill="none" stroke="#cccccc" stroke-width="1.0" stroke-linecap="round" stroke-linejoin="round" /></svg>
<svg style="left:1798px;top:835px;" width="22" height="22" viewBox="0 0 16 16"><circle cx="2.4" cy="8" r="1.15" fill="#cccccc"/><circle cx="8" cy="8" r="1.15" fill="#cccccc"/><circle cx="13.6" cy="8" r="1.15" fill="#cccccc"/></svg>
<svg style="left:1836px;top:834.5px;" width="22" height="22" viewBox="0 0 16 16"><path d="M3.2 10.4 L8 5.6 L12.8 10.4" fill="none" stroke="#cccccc" stroke-width="1.15" stroke-linecap="round" stroke-linejoin="round"  stroke-linecap="butt" stroke-linejoin="miter"/></svg>
<svg style="left:1875.5px;top:836.3px;" width="20" height="20" viewBox="0 0 16 16"><path d="M3.5 3.5 L12.5 12.5 M12.5 3.5 L3.5 12.5" fill="none" stroke="#cccccc" stroke-width="1.25" stroke-linecap="round" stroke-linejoin="round"  stroke-linecap="butt"/></svg>
<span class="t m" style="top:926px;height:26px;line-height:26px;font-size:18.4px;color:#e5e5e5;font-weight:700;left:357px;letter-spacing:-0.037px;-webkit-text-stroke-width:0;"><span style="color:#e5e5e5">webpack compiled </span><span style="color:#23d18b">successfully</span></span>
<div style="left:357px;top:949.5px;width:11px;height:24.5px;border:1.4px solid #d8d8d8;"></div>
<div style="left:1899px;top:897px;width:21px;height:78px;border-left:1px solid #0b0b0b;border-top:1px solid #0b0b0b;"></div>
<div style="left:0px;top:977px;width:51px;height:31px;background:#0078d4;"></div>
<svg style="left:0px;top:976px;" width="51" height="32" viewBox="0 0 51 32"><path d="M19.2 12.9 L25.4 17.8 L19.2 23.6 M31.8 7 L26.2 12.3 L31.8 17.8" fill="none" stroke="#ffffff" stroke-width="1.6" stroke-linejoin="miter"/></svg>
<svg style="left:0px;top:976px;" width="420" height="32" viewBox="0 976 420 32"><circle cx="66" cy="984.3" r="3.05" fill="none" stroke="#cccccc" stroke-width="1.3" stroke-linecap="round" stroke-linejoin="round"/><circle cx="75.2" cy="988.2" r="3.05" fill="none" stroke="#cccccc" stroke-width="1.3" stroke-linecap="round" stroke-linejoin="round"/><circle cx="66" cy="998.8" r="3.05" fill="none" stroke="#cccccc" stroke-width="1.3" stroke-linecap="round" stroke-linejoin="round"/><path d="M66 987.4 V995.7 M74 991 C73 993.2 70 993.2 68.5 993.3 C67 993.6 66.2 994.4 66 995.6" fill="none" stroke="#cccccc" stroke-width="1.3" stroke-linecap="round" stroke-linejoin="round"/><path d="M179.2 996.7 H176.4 C173.8 996.7 172.5 994.8 172.5 993 C172.5 990.8 174.2 989.4 176.2 989.4 C176.8 987 179 985.6 181.6 985.6 C184.6 985.6 186.6 987.4 187.1 989.8 C189.2 989.9 190.6 991.4 190.6 993.2 C190.6 995.2 189.2 996.7 187 996.7 H184.2" fill="none" stroke="#cccccc" stroke-width="1.3" stroke-linecap="round" stroke-linejoin="round"/><path d="M181.7 999.6 V991.4 M178.9 993.9 L181.7 991.1 L184.5 993.9" fill="none" stroke="#cccccc" stroke-width="1.3" stroke-linecap="round" stroke-linejoin="round"/><circle cx="217.6" cy="985.6" r="2.6" fill="none" stroke="#cccccc" stroke-width="1.3" stroke-linecap="round" stroke-linejoin="round"/><circle cx="217.6" cy="997.7" r="2.6" fill="none" stroke="#cccccc" stroke-width="1.3" stroke-linecap="round" stroke-linejoin="round"/><circle cx="228.1" cy="990.8" r="2.6" fill="none" stroke="#cccccc" stroke-width="1.3" stroke-linecap="round" stroke-linejoin="round"/><path d="M217.6 988.2 V995.1 M223.1 982 V1001.7 M228.1 993.4 V995.6 C228.1 997.4 226.6 998.3 225 998.3 H220.3" fill="none" stroke="#cccccc" stroke-width="1.3" stroke-linecap="round" stroke-linejoin="round"/><path d="M277.5 982.3 C270 982.8 264.5 987 262.5 992.6 L267.5 997.9 C273 995.8 277 990 277.5 982.3 Z" fill="none" stroke="#cccccc" stroke-width="1.3" stroke-linecap="round" stroke-linejoin="round"/><path d="M264.6 987.6 H259.6 V992.5 L267.6 1000.4 H272.6 V995.4 M259.6 996.8 V1000.4 H263.2" fill="none" stroke="#cccccc" stroke-width="1.3" stroke-linecap="round" stroke-linejoin="round"/><circle cx="270.5" cy="989.6" r="1.9" fill="#cccccc"/><g transform="translate(289.2 991.2) rotate(-45)"><path d="M-12.8 0 H-10.1 M-2.7 -4.05 H-6 A4.05 4.05 0 0 0 -6 4.05 H-2.7 Z M-2.7 -1.8 H-.3 M-2.7 1.8 H-.3 M2.65 -4.05 H4.6 A4.05 4.05 0 0 1 4.6 4.05 H2.65 Z M8.65 0 H12.8" fill="none" stroke="#cccccc" stroke-width="1.3" stroke-linecap="round" stroke-linejoin="round"/></g></svg>
<span class="t" style="top:980px;height:24px;line-height:24px;font-size:17.4px;color:#cccccc;left:86.5px;letter-spacing:0.373px;">new-dev*</span>
<span class="t" style="top:980px;height:24px;line-height:24px;font-size:17.4px;color:#cccccc;left:305px;letter-spacing:-0.009px;">Launchpad</span>
<svg style="left:415.4px;top:980.8px;" width="21.6" height="21.6" viewBox="0 0 16 16"><circle cx="8" cy="8" r="6.4" fill="none" stroke="#cccccc" stroke-width="1.1" stroke-linecap="round" stroke-linejoin="round" /><path d="M5.4 5.4 L10.6 10.6 M10.6 5.4 L5.4 10.6" fill="none" stroke="#cccccc" stroke-width="1.1" stroke-linecap="round" stroke-linejoin="round" /></svg>
<span class="t" style="top:980px;height:24px;line-height:24px;font-size:17.4px;color:#cccccc;left:441.3px;">0</span>
<svg style="left:456.2px;top:980px;" width="21.4" height="21.4" viewBox="0 0 16 16"><path d="M8 1.8 L14.8 14 H1.2 Z" fill="none" stroke="#cccccc" stroke-width="1.1" stroke-linecap="round" stroke-linejoin="round" /><path d="M8 6 V10" fill="none" stroke="#cccccc" stroke-width="1.2" stroke-linecap="round" stroke-linejoin="round" /><circle cx="8" cy="12" r=".8" fill="#cccccc"/></svg>
<span class="t" style="top:980px;height:24px;line-height:24px;font-size:17.4px;color:#cccccc;left:482.3px;">0</span>
<svg style="left:955px;top:982px;" width="20" height="20" viewBox="0 0 16 16"><circle cx="8" cy="8" r="3.7" fill="none" stroke="#cccccc" stroke-width="1.15" stroke-linecap="round" stroke-linejoin="round" /><path d="M8 .6 V4.3 M8 11.7 V15.4" fill="none" stroke="#cccccc" stroke-width="1.15" stroke-linecap="round" stroke-linejoin="round" /></svg>
<span class="t" style="top:980px;height:24px;line-height:24px;font-size:17.4px;color:#cccccc;left:981px;letter-spacing:0.153px;">You, 4 months ago</span>
<svg style="left:1153px;top:982px;" width="20" height="20" viewBox="0 0 16 16"><circle cx="8" cy="8" r="3.7" fill="none" stroke="#cccccc" stroke-width="1.15" stroke-linecap="round" stroke-linejoin="round" /><path d="M8 .6 V4.3 M8 11.7 V15.4" fill="none" stroke="#cccccc" stroke-width="1.15" stroke-linecap="round" stroke-linejoin="round" /></svg>
<span class="t" style="top:980px;height:24px;line-height:24px;font-size:17.4px;color:#cccccc;left:1179px;letter-spacing:0.220px;">riya (3 months ago)</span>
<span class="t" style="top:980px;height:24px;line-height:24px;font-size:17.4px;color:#cccccc;left:1357px;letter-spacing:-0.101px;">Ln 8, Col 9</span>
<span class="t" style="top:980px;height:24px;line-height:24px;font-size:17.4px;color:#cccccc;left:1464px;transform:scaleX(0.9438);transform-origin:0 50%;">Spaces: 2</span>
<span class="t" style="top:980px;height:24px;line-height:24px;font-size:17.4px;color:#cccccc;left:1561px;transform:scaleX(0.9537);transform-origin:0 50%;">UTF-8</span>
<span class="t" style="top:980px;height:24px;line-height:24px;font-size:17.4px;color:#cccccc;left:1632px;letter-spacing:-0.398px;">LF</span>
<svg style="left:1672px;top:982px;" width="21" height="21" viewBox="0 0 16 16"><path d="M5.4 2 C3.6 2 3.4 2.8 3.4 4 V6 C3.4 7.2 2.8 7.8 1.6 8 C2.8 8.2 3.4 8.8 3.4 10 V12 C3.4 13.2 3.6 14 5.4 14" fill="none" stroke="#cccccc" stroke-width="1.1" stroke-linecap="round" stroke-linejoin="round" /><path d="M9.6 2 C11.4 2 11.6 2.8 11.6 4 V6 C11.6 7 12 7.6 12.8 7.9" fill="none" stroke="#cccccc" stroke-width="1.1" stroke-linecap="round" stroke-linejoin="round" /><circle cx="11.6" cy="11.8" r="3.2" fill="#cccccc"/><path d="M10.2 10.4 L13 13.2 M13 10.4 L10.2 13.2" stroke="#181818" stroke-width="1"/></svg>
<span class="t" style="top:980px;height:24px;line-height:24px;font-size:17.4px;color:#cccccc;left:1701px;letter-spacing:-0.086px;">HTML</span>
<svg style="left:1768px;top:982px;" width="21" height="21" viewBox="0 0 16 16"><path d="M1 9 L4 12.4 L10.6 3.4 M6.6 10.6 L8.2 12.4 L14.8 3.4" fill="none" stroke="#cccccc" stroke-width="1.1" stroke-linecap="round" stroke-linejoin="round" /></svg>
<span class="t" style="top:980px;height:24px;line-height:24px;font-size:17.4px;color:#cccccc;left:1795px;letter-spacing:0.242px;">Prettier</span>
<svg style="left:1870px;top:976px;" width="40" height="32" viewBox="1870 976 40 32"><path d="M1879.8 997.9 H1894.8 L1892.5 994 V988.7 a5.25 5.25 0 0 0-10.5 0 V994 Z M1885.2 998.6 a2.1 2.1 0 0 0 4.2 0" fill="none" stroke="#cccccc" stroke-width="1.3" stroke-linecap="round" stroke-linejoin="round"/></svg>
<div style="left:33.1px;top:1029.1px;width:30px;height:30px;border-radius:15px;background:linear-gradient(140deg,#f2c02a 8%,#f08a18 55%,#ee6610 95%);"></div>
<div style="left:46.8px;top:1018.7px;width:23.2px;height:23.2px;background:#c42b1c;border-radius:12px;"></div>
<span class="t" style="top:1018.9px;height:23px;line-height:23px;font-size:16.2px;color:#fff;left:54px;">8</span>
<svg style="left:302px;top:1027px" width="35" height="35" viewBox="0 0 35 35"><defs><linearGradient id="wl" gradientUnits="userSpaceOnUse" x1="0" y1="0" x2="35" y2="35"><stop offset="0" stop-color="#7fdcfc"/><stop offset=".45" stop-color="#3cc0f8"/><stop offset="1" stop-color="#0f98f0"/></linearGradient></defs><rect x="0" y="0" width="16.6" height="16.6" rx="1.2" fill="url(#wl)"/><rect x="18.4" y="0" width="16.6" height="16.6" rx="1.2" fill="url(#wl)"/><rect x="0" y="18.4" width="16.6" height="16.6" rx="1.2" fill="url(#wl)"/><rect x="18.4" y="18.4" width="16.6" height="16.6" rx="1.2" fill="url(#wl)"/></svg>
<div style="left:359px;top:1022px;width:326px;height:44px;background:#f3f3f3;border-radius:22px;border:1px solid #fdfdfd;"></div>
<svg style="left:373px;top:1031px;" width="26" height="26" viewBox="0 0 16 16"><circle cx="6.8" cy="6.8" r="5" fill="none" stroke="#2b2b2b" stroke-width="1.5"/><path d="M10.4 10.4 L13.8 13.8" stroke="#2b2b2b" stroke-width="1.7" stroke-linecap="round"/></svg>
<span class="t" style="top:1029.5px;height:29px;line-height:29px;font-size:21px;color:#5a5a5a;left:413px;transform:scaleX(0.9166);transform-origin:0 50%;">Search</span>
<svg style="left:590px;top:1014px" width="110" height="60" viewBox="590 1014 110 60"><defs><clipPath id="pillc"><rect x="359" y="1022" width="326" height="44" rx="22"/></clipPath><linearGradient id="tray" x1="0" y1="0" x2="0" y2="1"><stop offset="0" stop-color="#b87f3f"/><stop offset=".62" stop-color="#bd8444"/><stop offset=".7" stop-color="#dfa862"/><stop offset=".8" stop-color="#b5763a"/><stop offset="1" stop-color="#9a5f2d"/></linearGradient></defs><g clip-path="url(#pillc)"><path d="M614.6 1048.4 L690 1046.8 V1063.7 H640 L618.7 1063.3 L608.9 1055 Z" fill="url(#tray)"/><defs><linearGradient id="bwy" x1="0" y1="0" x2="1" y2="0"><stop offset="0" stop-color="#b9bbe0"/><stop offset=".3" stop-color="#d2d4ee"/><stop offset="1" stop-color="#7577b2"/></linearGradient><linearGradient id="cny" x1="0" y1="0" x2="1" y2="0"><stop offset="0" stop-color="#fbe23a"/><stop offset=".5" stop-color="#fbe23a"/><stop offset=".52" stop-color="#dcae18"/><stop offset="1" stop-color="#dcae18"/></linearGradient></defs><path d="M611.8000000000001 1042.1 Q611.8000000000001 1050 622.1 1050 Q632.4 1050 632.4 1042.1 Z" fill="url(#bwy)"/><ellipse cx="622.1" cy="1042.1" rx="10.3" ry="2.27" fill="#a9abd6"/><path d="M614.3 1041.3 L623.1999999999999 1032.2 Q624.4 1030.6000000000001 625.6 1032.2 L633.6 1041.3 Q623.95 1044.93 614.3 1041.3 Z" fill="url(#cny)"/><defs><linearGradient id="bwp" x1="0" y1="0" x2="1" y2="0"><stop offset="0" stop-color="#b9bbe0"/><stop offset=".3" stop-color="#d2d4ee"/><stop offset="1" stop-color="#7577b2"/></linearGradient><linearGradient id="cnp" x1="0" y1="0" x2="1" y2="0"><stop offset="0" stop-color="#f9668f"/><stop offset=".5" stop-color="#f9668f"/><stop offset=".52" stop-color="#d8245f"/><stop offset="1" stop-color="#d8245f"/></linearGradient></defs><path d="M653.6 1043.8 Q653.6 1053.6 666.2 1053.6 Q678.8000000000001 1053.6 678.8000000000001 1043.8 Z" fill="url(#bwp)"/><ellipse cx="666.2" cy="1043.8" rx="12.6" ry="2.77" fill="#a9abd6"/><path d="M654.8 1043 L664.4 1033.1 Q665.6 1031.5 666.8000000000001 1033.1 L678.3 1043 Q666.55 1047.44 654.8 1043 Z" fill="url(#cnp)"/><defs><linearGradient id="bwg" x1="0" y1="0" x2="1" y2="0"><stop offset="0" stop-color="#b9bbe0"/><stop offset=".3" stop-color="#d2d4ee"/><stop offset="1" stop-color="#7577b2"/></linearGradient><linearGradient id="cng" x1="0" y1="0" x2="1" y2="0"><stop offset="0" stop-color="#3fe0ac"/><stop offset=".5" stop-color="#3fe0ac"/><stop offset=".52" stop-color="#3cab70"/><stop offset="1" stop-color="#3cab70"/></linearGradient></defs><path d="M626.2 1047.2 Q626.2 1057.8 643 1057.8 Q659.8 1057.8 659.8 1047.2 Z" fill="url(#bwg)"/><ellipse cx="643" cy="1047.2" rx="16.8" ry="3.70" fill="#a9abd6"/><path d="M629 1046.4 L641.8 1033.3 Q643 1031.7 644.2 1033.3 L657.9 1046.4 Q643.45 1052.31 629 1046.4 Z" fill="url(#cng)"/></g></svg>
<div style="left:705px;top:1037px;width:27px;height:24px;background:#5a5a5a;border-radius:3px;"></div>
<div style="left:714px;top:1028px;width:27px;height:25px;border-radius:3px;background:linear-gradient(180deg,#fdfdfd,#cfcfcf);"></div>
<svg style="left:770px;top:1026px" width="37" height="37" viewBox="0 0 37 37"><defs><linearGradient id="cpL" x1="0" y1="0" x2="0" y2="1"><stop offset="0" stop-color="#1f7ff0"/><stop offset=".3" stop-color="#22a6dc"/><stop offset=".62" stop-color="#5fc77a"/><stop offset="1" stop-color="#f2d416"/></linearGradient><linearGradient id="cpR" x1="0" y1="0" x2="0" y2="1"><stop offset="0" stop-color="#a45cf0"/><stop offset=".4" stop-color="#e0559c"/><stop offset="1" stop-color="#fba348"/></linearGradient></defs><path d="M12.3 30.6 L10.8 25.6 L14.8 23.8 L19.7 23.6 L22 30 L16 33 Z" fill="#e4522c" stroke="#e4522c" stroke-width="1.6" stroke-linejoin="round"/><path d="M8.8 3.6 H23.4 L26 5.6 L25.4 9 L22.5 11.4 H18.6 L14.6 23.4 L11.3 24.2 L5.4 23.6 L2.9 21 L4.6 13.7 L6.5 6.8 Z" fill="url(#cpL)" stroke="url(#cpL)" stroke-width="1.8" stroke-linejoin="round"/><path d="M21.5 3.2 H23.6 L26.8 5.4 L26 9.4 L22.6 11.8 L18.8 11.6 Z" fill="#1a56d6" opacity=".8"/><path d="M23.6 12.2 H32.4 L34.8 14.4 L34.3 18.6 L31 29.2 L27.8 32.3 H16 L14 30.6 L19.9 23.9 Z" fill="url(#cpR)" stroke="url(#cpR)" stroke-width="1.6" stroke-linejoin="round"/><path d="M18.9 11.9 H22.9 L19.8 23.6 L14.9 23.7 Z" fill="#1f1f1f"/></svg>
<svg style="left:836px;top:1026px" width="38" height="38" viewBox="836 1026 38 38"><defs><linearGradient id="stg" x1="0" y1="0" x2="0" y2="1"><stop offset="0" stop-color="#fdfdfd"/><stop offset="1" stop-color="#e4e4e4"/></linearGradient></defs><path d="M846.2 1033.5 V1030.4 Q846.2 1028.4 848.2 1028.4 H860.4 Q862.4 1028.4 862.4 1030.4 V1033.5" fill="none" stroke="#2bb2f2" stroke-width="2.2"/><path d="M837.2 1032.6 Q837.2 1030.8 839 1030.8 H870.4 Q872.2 1030.8 872.2 1032.6 V1057.6 Q872.2 1062.2 867.6 1062.2 H841.8 Q837.2 1062.2 837.2 1057.6 Z" fill="url(#stg)"/><path d="M846.2 1030.8 V1033.6 M862.4 1030.8 V1033.6" stroke="#2bb2f2" stroke-width="2.2"/><rect x="847.1" y="1039.2" width="6.8" height="6.7" fill="#f25022"/><rect x="855.2" y="1039.2" width="6.8" height="6.7" fill="#7fba00"/><rect x="847.1" y="1047.2" width="6.8" height="6.7" fill="#00a4ef"/><rect x="855.2" y="1047.2" width="6.8" height="6.7" fill="#ffb900"/></svg>
<svg style="left:900px;top:1026px" width="42" height="36" viewBox="900 1026 42 36"><path d="M909 1041 L922 1029.6 Q923.4 1028.6 924.8 1029.6 L939.2 1038 V1055.6 Q939.2 1059 935.8 1059 H912.4 Q909 1059 909 1055.6 Z" fill="#28a8ea"/><path d="M920 1045 L936.6 1035.6 L939.2 1038 V1041.6 L924 1050.6 Z" fill="#0a5cb8"/><path d="M939.2 1041.6 V1055.6 Q939.2 1059 935.8 1059 H916 Z" fill="#50d9ff"/><path d="M909 1050 L925.5 1053 L916 1059 H912.4 Q909 1059 909 1055.6 Z" fill="#1a8fe0"/><path d="M924 1050.6 L939.2 1041.6 V1046 L921 1056.6 Z" fill="#1490df" opacity=".65"/><rect x="903.1" y="1035.1" width="17.8" height="17.7" rx="2" fill="#0f6cbd"/><ellipse cx="912" cy="1043.9" rx="3.7" ry="4.2" fill="none" stroke="#fff" stroke-width="2.1"/></svg>
<svg style="left:974px;top:1027px" width="26" height="34" viewBox="974.4 1027.4 25.2 32.9"><path d="M974.4 1027.4 H991.2 L999.6 1035.8 V1060.3 H974.4 Z" fill="#fbfbfb"/><path d="M991.2 1027.4 L999.6 1035.8 H991.2 Z" fill="#e2e2e2"/><path d="M991.2 1027.4 V1035.8 H999.6" fill="none" stroke="#c9c9c9" stroke-width=".7"/></svg>
<svg style="left:1034px;top:1026px" width="38" height="36" viewBox="1034 1026 38 36"><circle cx="1064.5" cy="1034.8" r="3.7" fill="#5059c9"/><path d="M1060 1040.2 H1069.9 V1050 Q1069.9 1055.1 1065 1055.1 Q1060 1055.1 1060 1050 Z" fill="#5059c9"/><circle cx="1053.6" cy="1032.8" r="5.4" fill="#7b83eb"/><path d="M1045.1 1040.2 H1062.5 V1051.4 Q1062.5 1060 1053.8 1060 Q1045.1 1060 1045.1 1051.4 Z" fill="#7b83eb"/><rect x="1035.2" y="1035.1" width="17.4" height="17.7" rx="1.8" fill="#4b53bc"/><path d="M1040 1040.2 H1047.6 M1043.8 1040.2 V1048.6" stroke="#fff" stroke-width="2"/></svg>
<svg style="left:1099px;top:1024px" width="40" height="40" viewBox="-20 -20 40 40"><defs><linearGradient id="egb" x1="0" y1="0" x2="0.4" y2="1"><stop offset="0" stop-color="#2fb4ee"/><stop offset="1" stop-color="#1170c6"/></linearGradient><linearGradient id="egg" x1="0" y1="0" x2="1" y2=".35"><stop offset="0" stop-color="#1f9fe0"/><stop offset=".45" stop-color="#2cc3cf"/><stop offset="1" stop-color="#74de45"/></linearGradient></defs><circle cx="0" cy="0" r="18" fill="url(#egb)"/><path d="M-6.4 -1 C-7 6 -4 10.5 2 12.8 C7 14.6 12 12.6 15.6 9 C14.6 13 11.6 16 9 17 C3 19 -4 17 -7.4 11.9 C-9.6 8.5 -9.6 2.5 -6.4 -1 Z" fill="#0d57a6"/><path d="M-17.6 -3.8 A18 18 0 1 1 15 9.6 C12 10.6 8 10.2 5 8 C3.2 6.4 3.6 4.6 5.4 3 C5.6 0 3.5 -4 1.5 -5.9 C-1.5 -8 -6 -9 -10.4 -8.1 C-13.5 -7.4 -16 -5.6 -17.6 -3.8 Z" fill="url(#egg)"/><ellipse cx="2.2" cy="2.4" rx="3.3" ry="4.2" fill="#1f1f1f" transform="rotate(-20 2.2 2.4)"/></svg>
<svg style="left:1165.2px;top:1024.2px" width="40" height="40" viewBox="-20 -20 40 40"><path d="M-15.85 -9.15 A18.3 18.3 0 0 1 15.85 -9.15 L0.16 -9.40 A9.4 9.4 0 0 0 -8.22 4.56 Z" fill="#e33b2e"/><path d="M15.85 -9.15 A18.3 18.3 0 0 1 0.00 18.30 L8.06 4.84 A9.4 9.4 0 0 0 0.16 -9.40 Z" fill="#fbc116"/><path d="M0.00 18.30 A18.3 18.3 0 0 1 -15.85 -9.15 L-8.22 4.56 A9.4 9.4 0 0 0 8.06 4.84 Z" fill="#2da94f"/><circle cx="0" cy="0" r="9.5" fill="#fff"/><circle cx="0" cy="0" r="7.8" fill="#3b7de9"/></svg>
<div style="left:1186.2px;top:1018px;width:26px;height:26px;background:#3c2378;border-radius:13px;opacity:.55;"></div>
<div style="left:1186.7px;top:1018.4px;width:24.8px;height:24.8px;background:#522da8;border-radius:12.4px;"></div>
<span class="t" style="top:1023.2px;height:16px;line-height:16px;font-size:11.5px;color:#e4d9f7;font-weight:700;left:1194.8px;">R</span>
<svg style="left:1232px;top:1026px" width="38" height="36" viewBox="1232 1026 38 36"><defs><linearGradient id="fog" x1="0" y1="0" x2="0" y2="1"><stop offset="0" stop-color="#ffd964"/><stop offset="1" stop-color="#f6ba2a"/></linearGradient><linearGradient id="fob" x1="0" y1="0" x2="0" y2="1"><stop offset="0" stop-color="#1f8fea"/><stop offset="1" stop-color="#0c62b6"/></linearGradient></defs><path d="M1233.2 1029.4 Q1233.2 1027.9 1234.7 1027.9 H1243.6 Q1244.6 1027.9 1245.4 1028.6 L1248.6 1031.3 H1267.4 Q1268.9 1031.3 1268.9 1032.8 V1040 H1233.2 Z" fill="#e8a71c"/><path d="M1233.2 1033.3 H1244 Q1245 1033.3 1245.8 1032.6 L1247.2 1031.5 H1267.4 Q1268.9 1031.5 1268.9 1033 V1058.8 Q1268.9 1060.3 1267.4 1060.3 H1234.7 Q1233.2 1060.3 1233.2 1058.8 Z" fill="url(#fog)"/><path d="M1239.2 1053.4 Q1239.2 1050.1 1242.5 1050.1 H1260.1 Q1263.4 1050.1 1263.4 1053.4 V1060.3 H1239.2 Z" fill="url(#fob)"/><rect x="1244.1" y="1054" width="14.4" height="2.1" rx="1" fill="#0a4a94"/></svg>
<svg style="left:1299px;top:1025.9px;" width="36.4" height="36.7" viewBox="0 0 100 100"><path d="M70 5 L73 31 L13 75 L4 69 L6 62 Z" fill="#0a78c2" stroke="#0a78c2" stroke-width="4" stroke-linejoin="round"/><path d="M4 31 L13 25 L73 69 L70 95 L6 38 Z" fill="#0e8ddc" stroke="#0e8ddc" stroke-width="4" stroke-linejoin="round"/><path d="M73 30 L43.5 50 L73 70 Z" fill="#1f1f1f"/><path d="M70.5 2.5 L97 14.5 Q99 15.5 99 18 V82 Q99 84.5 97 85.5 L70.5 97.5 Z" fill="#2aa9f5"/><path d="M70.5 2.5 L74 4 V96 L70.5 97.5 Z" fill="#1e9cec"/></svg>
<div style="left:1114.4px;top:1068.3px;width:9.2px;height:4.9px;background:#9a9a9a;border-radius:2.5px;"></div>
<div style="left:1180.8000000000002px;top:1068.3px;width:9.2px;height:4.9px;background:#9a9a9a;border-radius:2.5px;"></div>
<div style="left:1246.4px;top:1068.3px;width:9.2px;height:4.9px;background:#9a9a9a;border-radius:2.5px;"></div>
<div style="left:1312.4px;top:1068.3px;width:9.2px;height:4.9px;background:#9a9a9a;border-radius:2.5px;"></div>
<svg style="left:1517px;top:1034px;" width="20" height="20" viewBox="0 0 16 16"><path d="M2.5 11.5 L8 6 L13.5 11.5" fill="none" stroke="#ffffff" stroke-width="1.65" stroke-linecap="round" stroke-linejoin="round"/></svg>
<svg style="left:1562px;top:1035px" width="27" height="18" viewBox="0 0 27 18"><path d="M6 17 Q1 17 1 12.5 Q1 9 4.6 8.4 Q6 3 11 3 Q14.6 3 16.4 6 Q17.6 5.4 19 5.4 Q23 5.4 23.4 9.6 Q26 10.4 26 13.4 Q26 17 22 17 Z" fill="#bdbdbd"/><path d="M4 17 Q1 16.4 1 13 L16 9 L25.6 14.6 Q25 17 22 17 Z" fill="#f2f2f2"/></svg>
<span class="t" style="top:1021px;height:26px;line-height:26px;font-size:18.6px;color:#ffffff;left:1614px;transform:scaleX(0.8934);transform-origin:0 50%;">ENG</span>
<span class="t" style="top:1044px;height:26px;line-height:26px;font-size:18.6px;color:#ffffff;left:1622px;letter-spacing:0.203px;">IN</span>
<svg style="left:1675px;top:1034px" width="26" height="20" viewBox="0 0 26 20"><g fill="none" stroke="#ffffff" stroke-width="1.6" stroke-linecap="round"><path d="M1.5 7.5 Q13 -3 24.5 7.5"/><path d="M5.4 11.2 Q13 4.4 20.6 11.2"/><path d="M9.2 14.6 Q13 11.4 16.8 14.6"/></g><circle cx="13" cy="17.4" r="1.7" fill="#ffffff"/></svg>
<svg style="left:1711px;top:1033px" width="28" height="22" viewBox="0 0 28 22"><path d="M2 8 H6 L11 3.4 V18.6 L6 14 H2 Z" fill="none" stroke="#ffffff" stroke-width="1.4" stroke-linejoin="round"/><g fill="none" stroke-width="1.4" stroke-linecap="round"><path d="M14 8 Q15.6 11 14 14" stroke="#ffffff"/><path d="M17 5.6 Q20 11 17 16.4" stroke="#ffffff"/><path d="M20.4 3 Q24.6 11 20.4 19" stroke="#777"/></g></svg>
<svg style="left:1748px;top:1036px" width="27" height="17" viewBox="0 0 27 17"><rect x="1" y="1.4" width="21.6" height="14" rx="3.6" fill="none" stroke="#ffffff" stroke-width="1.5"/><rect x="3.6" y="4.2" width="8.4" height="8.4" rx="1.2" fill="#ffffff"/><path d="M24 6 Q26 6.4 26 8.4 Q26 10.4 24 10.8 Z" fill="#ffffff"/></svg>
<span class="t" style="top:1019px;height:26px;line-height:26px;font-size:18.6px;color:#ffffff;left:1846px;letter-spacing:-0.306px;">16:06</span>
<span class="t" style="top:1043px;height:26px;line-height:26px;font-size:18.6px;color:#ffffff;left:1798px;letter-spacing:-0.212px;">04-03-2025</span>
</body></html>
